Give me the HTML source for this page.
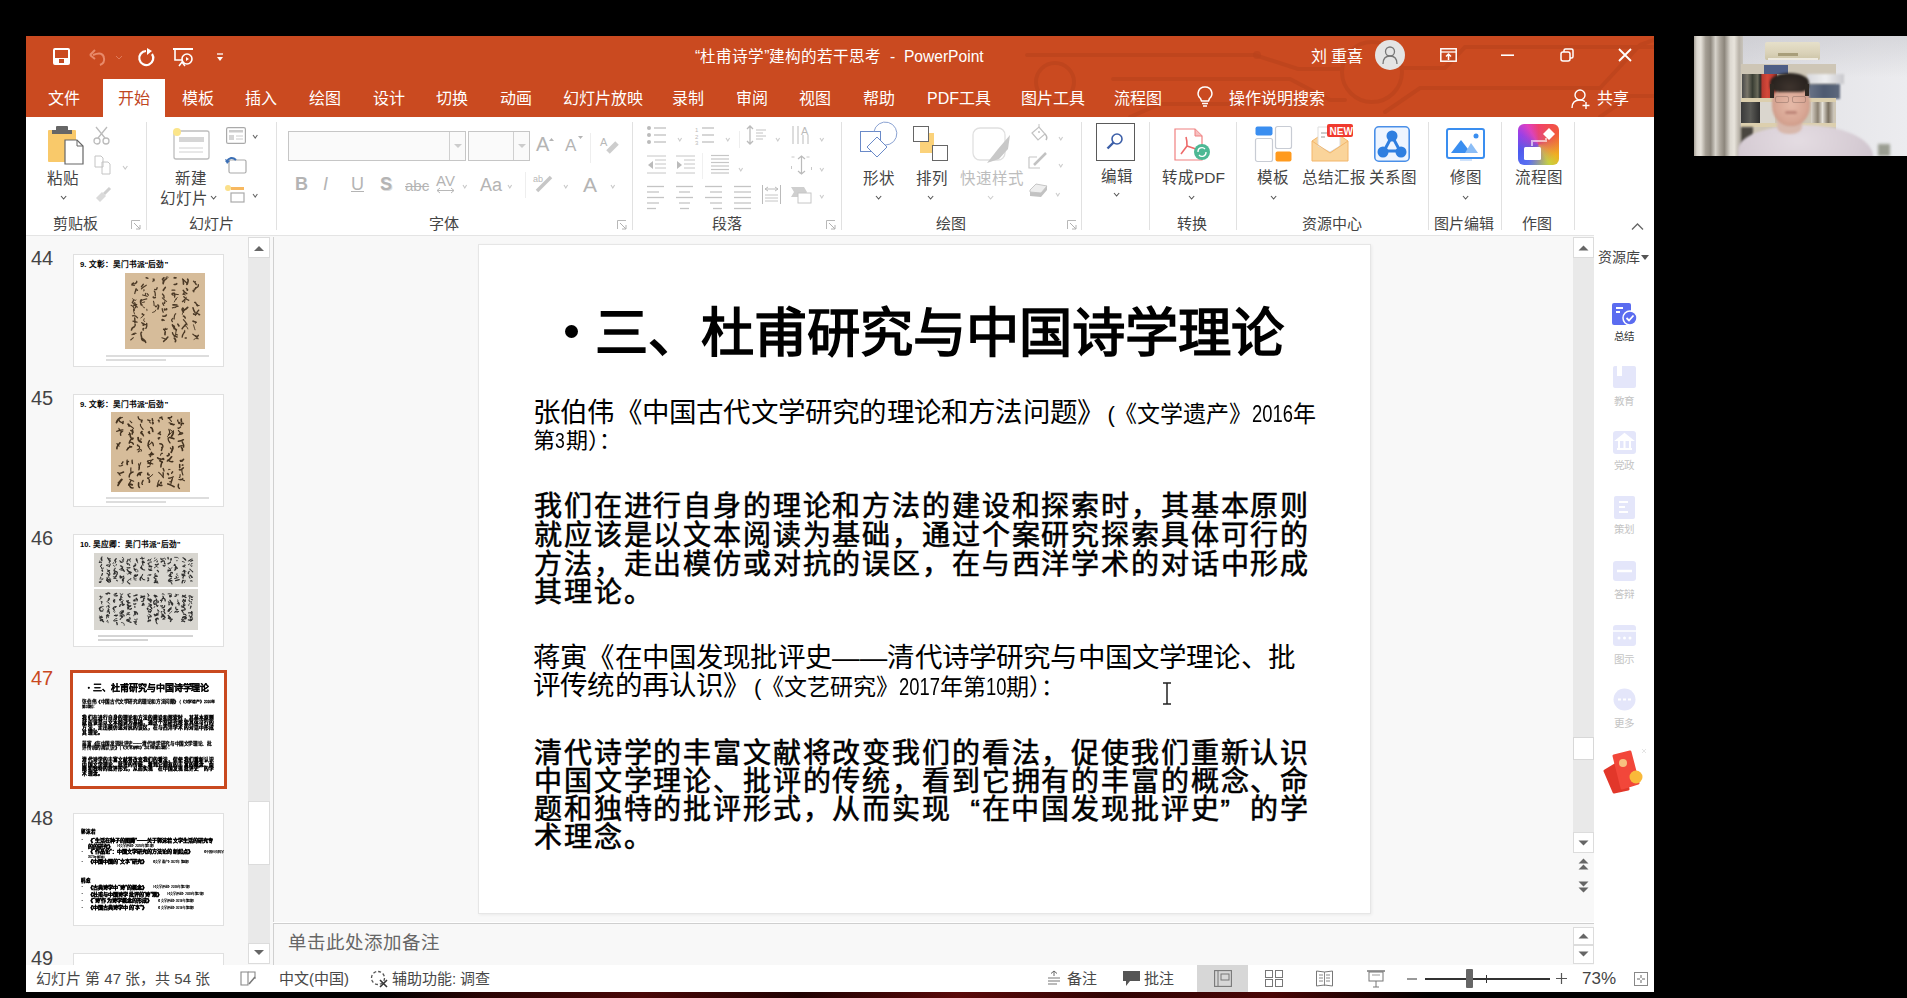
<!DOCTYPE html><html lang="zh-CN"><head><meta charset="utf-8"><style>
*{margin:0;padding:0;box-sizing:border-box}
html,body{width:1907px;height:998px;overflow:hidden;background:#000;font-family:"Liberation Sans",sans-serif}
.abs{position:absolute}
.t{position:absolute;white-space:nowrap;line-height:1}
svg{position:absolute;overflow:visible}
</style></head><body>

<div class="abs" style="left:26px;top:36px;width:1628px;height:81px;background:#CA4A20"></div>
<svg style="left:0px;top:0px;overflow:hidden;clip-path:inset(36px 0 0 26px)" width="1654" height="117" viewBox="0 0 1654 117"><g fill="none" stroke="#B9421C" stroke-width="4" opacity="0.6" stroke-linecap="round"><path d="M1027 55 L1255 55 L1298 69 L1340 69"/><path d="M1113 79 L1290 79 L1330 100 L1345 100"/><circle cx="1372" cy="72" r="30"/><circle cx="1055" cy="82" r="19"/><path d="M1402 68 L1445 68 L1465 47 L1654 47"/><path d="M1385 112 L1420 88 L1600 88 L1640 45 L1654 40"/><path d="M1130 117 L1160 104 L1300 104"/><path d="M1600 117 L1630 96 L1654 96"/></g><circle cx="1257" cy="55" r="4" fill="#B9421C" opacity="0.6"/></svg>
<svg style="left:53px;top:48px;" width="17" height="17" viewBox="0 0 17 17"><rect x="1" y="1" width="15" height="15" rx="1" fill="none" stroke="#fff" stroke-width="2"/><rect x="1" y="10" width="15" height="6" fill="#fff"/><rect x="6" y="11" width="5" height="4" fill="#C34A22"/></svg>
<svg style="left:89px;top:49px;" width="18" height="17" viewBox="0 0 18 17"><path d="M4 6 Q14 2 15 9 Q16 14 11 16" fill="none" stroke="#E88A6A" stroke-width="2"/><path d="M1 6 L6 1 M1 6 L6 10" stroke="#E88A6A" stroke-width="2" fill="none"/></svg>
<svg style="left:115px;top:55px;" width="8" height="5" viewBox="0 0 8 5"><path d="M1 1 L4 4 L7 1" stroke="#E07A5A" fill="none" stroke-width="1"/></svg>
<svg style="left:138px;top:48px;" width="17" height="18" viewBox="0 0 17 18"><path d="M8 3 A7 7 0 1 0 14 6" fill="none" stroke="#fff" stroke-width="2.2"/><path d="M9 0 L14 3 L9 7 Z" fill="#fff"/></svg>
<svg style="left:173px;top:48px;" width="20" height="19" viewBox="0 0 20 19"><path d="M0 1 L20 1" stroke="#fff" stroke-width="2"/><path d="M2 2 L2 12 L9 12" fill="none" stroke="#fff" stroke-width="1.6"/><circle cx="14" cy="11" r="5" fill="none" stroke="#fff" stroke-width="1.6"/><path d="M13 9 L16 11 L13 13Z" fill="#fff"/><path d="M6 18 L9 14 L12 18" stroke="#fff" fill="none" stroke-width="1.5"/></svg>
<svg style="left:217px;top:54px;" width="6" height="8" viewBox="0 0 6 8"><path d="M0 0 L6 0" stroke="#fff" stroke-width="1.3"/><path d="M0 3 L6 3 L3 7Z" fill="#fff"/></svg>
<div class="t" style="left:695px;top:48.5px;font-size:15.6px;color:#fff;font-weight:400;">“杜甫诗学”建构的若干思考 &nbsp;- &nbsp;PowerPoint</div>
<div class="t" style="left:1311px;top:48.5px;font-size:16px;color:#fff;font-weight:400;">刘 重喜</div>
<div class="abs" style="left:1375px;top:40px;width:30px;height:30px;background:#E4E4E4;border-radius:50%"></div>
<svg style="left:1381px;top:45px;" width="18" height="20" viewBox="0 0 18 20"><circle cx="9" cy="6.5" r="4.5" fill="none" stroke="#777" stroke-width="1.3"/><path d="M2 19 Q2 11 9 11 Q16 11 16 19" fill="none" stroke="#777" stroke-width="1.3"/></svg>
<svg style="left:1440px;top:48px;" width="17" height="14" viewBox="0 0 17 14"><rect x="0.8" y="0.8" width="15.4" height="12.4" fill="none" stroke="#fff" stroke-width="1.5"/><path d="M1 4 L16 4" stroke="#fff" stroke-width="1.3"/><path d="M8.5 12 L8.5 6 M6 8.5 L8.5 6 L11 8.5" stroke="#fff" stroke-width="1.5" fill="none"/></svg>
<svg style="left:1501px;top:54px;" width="13" height="3" viewBox="0 0 13 3"><path d="M0 1.2 L13 1.2" stroke="#fff" stroke-width="1.6"/></svg>
<svg style="left:1560px;top:48px;" width="14" height="14" viewBox="0 0 14 14"><rect x="1" y="4" width="9" height="9" rx="2" fill="none" stroke="#fff" stroke-width="1.5"/><path d="M4 4 L4 2.5 Q4 1 5.5 1 L11.5 1 Q13 1 13 2.5 L13 8.5 Q13 10 11.5 10 L10 10" fill="none" stroke="#fff" stroke-width="1.5"/></svg>
<svg style="left:1618px;top:48px;" width="14" height="14" viewBox="0 0 14 14"><path d="M1 1 L13 13 M13 1 L1 13" stroke="#fff" stroke-width="1.8"/></svg>
<div class="abs" style="left:103px;top:79px;width:62px;height:39px;background:#fff"></div>
<div class="t" style="left:118px;top:91px;font-size:16px;color:#C0461F;font-weight:400;">开始</div>
<div class="t" style="left:48px;top:91px;font-size:16px;color:#fff;font-weight:400;">文件</div>
<div class="t" style="left:182px;top:91px;font-size:16px;color:#fff;font-weight:400;">模板</div>
<div class="t" style="left:245px;top:91px;font-size:16px;color:#fff;font-weight:400;">插入</div>
<div class="t" style="left:309px;top:91px;font-size:16px;color:#fff;font-weight:400;">绘图</div>
<div class="t" style="left:373px;top:91px;font-size:16px;color:#fff;font-weight:400;">设计</div>
<div class="t" style="left:436px;top:91px;font-size:16px;color:#fff;font-weight:400;">切换</div>
<div class="t" style="left:500px;top:91px;font-size:16px;color:#fff;font-weight:400;">动画</div>
<div class="t" style="left:563px;top:91px;font-size:16px;color:#fff;font-weight:400;">幻灯片放映</div>
<div class="t" style="left:672px;top:91px;font-size:16px;color:#fff;font-weight:400;">录制</div>
<div class="t" style="left:736px;top:91px;font-size:16px;color:#fff;font-weight:400;">审阅</div>
<div class="t" style="left:799px;top:91px;font-size:16px;color:#fff;font-weight:400;">视图</div>
<div class="t" style="left:863px;top:91px;font-size:16px;color:#fff;font-weight:400;">帮助</div>
<div class="t" style="left:927px;top:91px;font-size:16px;color:#fff;font-weight:400;">PDF工具</div>
<div class="t" style="left:1021px;top:91px;font-size:16px;color:#fff;font-weight:400;">图片工具</div>
<div class="t" style="left:1114px;top:91px;font-size:16px;color:#fff;font-weight:400;">流程图</div>
<svg style="left:1197px;top:86px;" width="16" height="22" viewBox="0 0 16 22"><path d="M8 1 A6.5 6.5 0 0 0 3.5 12.5 L4.5 15 L11.5 15 L12.5 12.5 A6.5 6.5 0 0 0 8 1Z" fill="none" stroke="#fff" stroke-width="1.5"/><path d="M5 17.5 L11 17.5 M6 20 L10 20" stroke="#fff" stroke-width="1.5"/></svg>
<div class="t" style="left:1229px;top:91px;font-size:16px;color:#fff;font-weight:400;">操作说明搜索</div>
<svg style="left:1571px;top:89px;" width="19" height="20" viewBox="0 0 19 20"><circle cx="9" cy="6" r="5" fill="none" stroke="#fff" stroke-width="1.4"/><path d="M1 19 Q1 11 9 11 Q12 11 14 12.5" fill="none" stroke="#fff" stroke-width="1.4"/><path d="M15 13 L15 20 M11.5 16.5 L18.5 16.5" stroke="#fff" stroke-width="1.4"/></svg>
<div class="t" style="left:1597px;top:91px;font-size:16px;color:#fff;font-weight:400;">共享</div>
<div class="abs" style="left:26px;top:117px;width:1628px;height:118px;background:#fff"></div>
<div class="abs" style="left:26px;top:235px;width:1628px;height:1px;background:#E4E4E4"></div>
<div class="abs" style="left:146px;top:122px;width:1px;height:108px;background:#E1E1E1"></div>
<div class="abs" style="left:276px;top:122px;width:1px;height:108px;background:#E1E1E1"></div>
<div class="abs" style="left:632px;top:122px;width:1px;height:108px;background:#E1E1E1"></div>
<div class="abs" style="left:841px;top:122px;width:1px;height:108px;background:#E1E1E1"></div>
<div class="abs" style="left:1081px;top:122px;width:1px;height:108px;background:#E1E1E1"></div>
<div class="abs" style="left:1149px;top:122px;width:1px;height:108px;background:#E1E1E1"></div>
<div class="abs" style="left:1236px;top:122px;width:1px;height:108px;background:#E1E1E1"></div>
<div class="abs" style="left:1428px;top:122px;width:1px;height:108px;background:#E1E1E1"></div>
<div class="abs" style="left:1501px;top:122px;width:1px;height:108px;background:#E1E1E1"></div>
<div class="abs" style="left:1574px;top:122px;width:1px;height:108px;background:#E1E1E1"></div>
<svg style="left:48px;top:126px;" width="36" height="39" viewBox="0 0 36 39"><rect x="0" y="4" width="28" height="32" rx="1" fill="#F9C96A"/><rect x="8" y="0" width="12" height="5" rx="1" fill="#666"/><rect x="4" y="4" width="20" height="4" fill="#666"/><path d="M17 14 L29 14 L35 20 L35 38 L17 38 Z" fill="#fff" stroke="#666" stroke-width="1.2"/><path d="M29 14 L29 20 L35 20" fill="none" stroke="#666" stroke-width="1"/></svg>
<div class="t" style="left:47px;top:170.5px;font-size:15.5px;color:#444;font-weight:400;">粘贴</div>
<svg style="left:60px;top:195px;" width="7.2" height="5" viewBox="0 0 7.2 5"><path d="M1 1 L3.6 4 L6.2 1" fill="none" stroke="#555" stroke-width="1.1"/></svg>
<div class="t" style="left:53px;top:216px;font-size:15px;color:#444;font-weight:400;">剪贴板</div>
<svg style="left:131px;top:220px;" width="10" height="10" viewBox="0 0 10 10"><path d="M0.5 9 L0.5 0.5 L9 0.5" fill="none" stroke="#B8B8B8" stroke-width="1"/><path d="M3 3 L9 9 M5 9 L9 9 L9 5" fill="none" stroke="#B0B0B0" stroke-width="1"/></svg>
<svg style="left:93px;top:126px;" width="18" height="19" viewBox="0 0 18 19"><circle cx="4" cy="15" r="3" fill="none" stroke="#BBB" stroke-width="1.3"/><circle cx="13" cy="15" r="3" fill="none" stroke="#BBB" stroke-width="1.3"/><path d="M5 12 L14 1 M12 12 L3 1" stroke="#BBB" stroke-width="1.3"/></svg>
<svg style="left:94px;top:155px;" width="17" height="20" viewBox="0 0 17 20"><path d="M1 1 L7 1 L9 3 L9 12 L1 12 Z M8 7 L14 7 L16 9 L16 19 L8 19 Z" fill="#fff" stroke="#C4C4C4" stroke-width="1"/></svg>
<svg style="left:122px;top:165px;" width="6.4" height="5" viewBox="0 0 6.4 5"><path d="M1 1 L3.2 4 L5.4 1" fill="none" stroke="#C8C8C8" stroke-width="1.1"/></svg>
<svg style="left:94px;top:186px;" width="18" height="17" viewBox="0 0 18 17"><path d="M2 12 L8 6 L12 10 L6 16 Z" fill="#DADADA"/><path d="M10 8 L16 2" stroke="#CFCFCF" stroke-width="3"/></svg>
<svg style="left:170px;top:125px;" width="40" height="35" viewBox="0 0 40 35"><rect x="4" y="6" width="35" height="28" rx="2" fill="#fff" stroke="#BDBDBD" stroke-width="1.3"/><rect x="9" y="12" width="25" height="5" fill="#D6D6D6"/><path d="M9 23 L33 23 M9 27 L33 27" stroke="#D0D0D0" stroke-width="1"/><circle cx="7" cy="7" r="4" fill="#FBE58A"/></svg>
<div class="t" style="left:175px;top:170.5px;font-size:15.5px;color:#444;font-weight:400;">新建</div>
<div class="t" style="left:160px;top:190.5px;font-size:15.5px;color:#444;font-weight:400;">幻灯片</div>
<svg style="left:210px;top:195px;" width="7.2" height="5" viewBox="0 0 7.2 5"><path d="M1 1 L3.6 4 L6.2 1" fill="none" stroke="#555" stroke-width="1.1"/></svg>
<div class="t" style="left:189px;top:216px;font-size:15px;color:#444;font-weight:400;">幻灯片</div>
<svg style="left:226px;top:127px;" width="20" height="17" viewBox="0 0 20 17"><rect x="0.6" y="0.6" width="18.8" height="15.8" rx="1.5" fill="#fff" stroke="#AAA" stroke-width="1.2"/><rect x="3" y="3" width="14" height="2.5" fill="#CCC"/><rect x="3" y="8" width="5" height="5" fill="#D5D5D5"/><path d="M10 9 L17 9 M10 12 L17 12" stroke="#CCC"/></svg>
<svg style="left:252px;top:134px;" width="6.4" height="5" viewBox="0 0 6.4 5"><path d="M1 1 L3.2 4 L5.4 1" fill="none" stroke="#666" stroke-width="1.1"/></svg>
<svg style="left:225px;top:156px;" width="22" height="18" viewBox="0 0 22 18"><rect x="4" y="4" width="17" height="13" rx="1.5" fill="#fff" stroke="#AAA" stroke-width="1.2"/><path d="M1 6 Q6 -1 11 4" fill="none" stroke="#3B6FB5" stroke-width="2"/><path d="M0 3 L2 8 L5 5Z" fill="#3B6FB5"/></svg>
<svg style="left:225px;top:185px;" width="20" height="18" viewBox="0 0 20 18"><rect x="6" y="2" width="13" height="3" fill="#F7B860"/><circle cx="3" cy="3" r="3" fill="#FBE08A"/><rect x="6" y="8" width="13" height="9" fill="#fff" stroke="#AAA" stroke-width="1.2"/></svg>
<svg style="left:252px;top:193px;" width="6.4" height="5" viewBox="0 0 6.4 5"><path d="M1 1 L3.2 4 L5.4 1" fill="none" stroke="#666" stroke-width="1.1"/></svg>
<div class="abs" style="left:288px;top:131px;width:178px;height:30px;border:1px solid #C6C6C6;background:#FAFAFA"></div>
<div class="abs" style="left:449px;top:132px;width:1px;height:28px;background:#D0D0D0"></div>
<svg style="left:454px;top:144px;" width="8" height="4" viewBox="0 0 8 4"><path d="M0 0 L8 0 L4 4Z" fill="#CCC"/></svg>
<div class="abs" style="left:468px;top:131px;width:62px;height:30px;border:1px solid #C6C6C6;background:#FAFAFA"></div>
<div class="abs" style="left:513px;top:132px;width:1px;height:28px;background:#D0D0D0"></div>
<svg style="left:518px;top:144px;" width="8" height="4" viewBox="0 0 8 4"><path d="M0 0 L8 0 L4 4Z" fill="#CCC"/></svg>
<div class="t" style="left:536px;top:134px;font-size:20px;color:#B4B4B4;font-weight:400;">A</div>
<svg style="left:549px;top:138px;" width="5" height="3" viewBox="0 0 5 3"><path d="M0 3 L2.5 0 L5 3Z" fill="#B4B4B4"/></svg>
<div class="t" style="left:565px;top:137px;font-size:17px;color:#B4B4B4;font-weight:400;">A</div>
<svg style="left:578px;top:136px;" width="5" height="3" viewBox="0 0 5 3"><path d="M0 0 L5 0 L2.5 3Z" fill="#B4B4B4"/></svg>
<div class="abs" style="left:590px;top:133px;width:1px;height:30px;background:#EEE"></div>
<svg style="left:600px;top:135px;" width="20" height="19" viewBox="0 0 20 19"><text x="0" y="11" font-size="11" fill="#B8B8B8" font-family="Liberation Sans">A</text><path d="M8 17 L17 8" stroke="#CDCDCD" stroke-width="5"/></svg>
<div class="t" style="left:295px;top:175px;font-size:18px;color:#B4B4B4;font-weight:700;">B</div>
<div class="t" style="left:323px;top:175px;font-size:18px;color:#B4B4B4;font-weight:400;"><i>I</i></div>
<div class="t" style="left:351px;top:175px;font-size:18px;color:#B4B4B4;font-weight:400;"><u>U</u></div>
<div class="t" style="left:380px;top:175px;font-size:18px;color:#B4B4B4;font-weight:700;text-shadow:1px 1px 0 #DDD">S</div>
<div class="t" style="left:405px;top:178px;font-size:15px;color:#B4B4B4;font-weight:400;"><s>abc</s></div>
<div class="t" style="left:436px;top:173px;font-size:15px;color:#B4B4B4;font-weight:400;">AV</div>
<svg style="left:436px;top:188px;" width="19" height="5" viewBox="0 0 19 5"><path d="M1 2.5 L18 2.5 M1 2.5 L4 0 M1 2.5 L4 5 M18 2.5 L15 0 M18 2.5 L15 5" stroke="#B8B8B8" stroke-width="1"/></svg>
<svg style="left:462px;top:184px;" width="5.6000000000000005" height="5" viewBox="0 0 5.6000000000000005 5"><path d="M1 1 L2.8000000000000003 4 L4.6000000000000005 1" fill="none" stroke="#C8C8C8" stroke-width="1.1"/></svg>
<div class="t" style="left:480px;top:176px;font-size:18px;color:#B4B4B4;font-weight:400;">Aa</div>
<svg style="left:507px;top:184px;" width="5.6000000000000005" height="5" viewBox="0 0 5.6000000000000005 5"><path d="M1 1 L2.8000000000000003 4 L4.6000000000000005 1" fill="none" stroke="#C8C8C8" stroke-width="1.1"/></svg>
<div class="abs" style="left:525px;top:172px;width:1px;height:26px;background:#EEE"></div>
<svg style="left:533px;top:174px;" width="20" height="18" viewBox="0 0 20 18"><text x="0" y="8" font-size="9" fill="#B8B8B8" font-family="Liberation Sans">ab</text><path d="M4 17 L18 3" stroke="#C6C6C6" stroke-width="3.5"/></svg>
<svg style="left:563px;top:184px;" width="5.6000000000000005" height="5" viewBox="0 0 5.6000000000000005 5"><path d="M1 1 L2.8000000000000003 4 L4.6000000000000005 1" fill="none" stroke="#C8C8C8" stroke-width="1.1"/></svg>
<div class="t" style="left:583px;top:174px;font-size:21px;color:#B4B4B4;font-weight:400;">A</div>
<svg style="left:610px;top:184px;" width="5.6000000000000005" height="5" viewBox="0 0 5.6000000000000005 5"><path d="M1 1 L2.8000000000000003 4 L4.6000000000000005 1" fill="none" stroke="#C8C8C8" stroke-width="1.1"/></svg>
<div class="t" style="left:429px;top:216px;font-size:15px;color:#444;font-weight:400;">字体</div>
<svg style="left:617px;top:220px;" width="10" height="10" viewBox="0 0 10 10"><path d="M0.5 9 L0.5 0.5 L9 0.5" fill="none" stroke="#B8B8B8" stroke-width="1"/><path d="M3 3 L9 9 M5 9 L9 9 L9 5" fill="none" stroke="#B0B0B0" stroke-width="1"/></svg>
<svg style="left:647px;top:126px;" width="20" height="18" viewBox="0 0 20 18"><circle cx="2" cy="2" r="2" fill="#BBB"/><path d="M7 2 L19 2" stroke="#BBB" stroke-width="1.2"/><circle cx="2" cy="9" r="2" fill="#BBB"/><path d="M7 9 L19 9" stroke="#BBB" stroke-width="1.2"/><circle cx="2" cy="16" r="2" fill="#BBB"/><path d="M7 16 L19 16" stroke="#BBB" stroke-width="1.2"/></svg>
<svg style="left:677px;top:137px;" width="5.6000000000000005" height="5" viewBox="0 0 5.6000000000000005 5"><path d="M1 1 L2.8000000000000003 4 L4.6000000000000005 1" fill="none" stroke="#CCC" stroke-width="1.1"/></svg>
<svg style="left:695px;top:126px;" width="20" height="19" viewBox="0 0 20 19"><text x="0" y="6" font-size="6" fill="#BBB">1</text><text x="0" y="13" font-size="6" fill="#BBB">2</text><text x="0" y="19" font-size="6" fill="#BBB">3</text><path d="M7 2 L19 2" stroke="#BBB" stroke-width="1.2"/><path d="M7 9 L19 9" stroke="#BBB" stroke-width="1.2"/><path d="M7 16 L19 16" stroke="#BBB" stroke-width="1.2"/></svg>
<svg style="left:725px;top:137px;" width="5.6000000000000005" height="5" viewBox="0 0 5.6000000000000005 5"><path d="M1 1 L2.8000000000000003 4 L4.6000000000000005 1" fill="none" stroke="#CCC" stroke-width="1.1"/></svg>
<div class="abs" style="left:739px;top:131px;width:1px;height:17px;background:#EEEEEE"></div>
<svg style="left:747px;top:125px;" width="20" height="20" viewBox="0 0 20 20"><path d="M3 1 L3 19 M0 4 L3 1 L6 4 M0 16 L3 19 L6 16" stroke="#BBB" fill="none" stroke-width="1.3"/><path d="M9 5 L19 5 M9 8 L16 8 M9 11 L19 11 M9 14 L16 14" stroke="#C2C2C2"/></svg>
<svg style="left:775px;top:137px;" width="5.6000000000000005" height="5" viewBox="0 0 5.6000000000000005 5"><path d="M1 1 L2.8000000000000003 4 L4.6000000000000005 1" fill="none" stroke="#CCC" stroke-width="1.1"/></svg>
<svg style="left:791px;top:125px;" width="22" height="21" viewBox="0 0 22 21"><path d="M2 1 L2 19 M7 1 L7 19 M12 10 L12 19 M17 10 L17 19" stroke="#BBB" stroke-width="1"/><text x="10" y="10" font-size="11" fill="#BBB">A</text></svg>
<svg style="left:819px;top:137px;" width="5.6000000000000005" height="5" viewBox="0 0 5.6000000000000005 5"><path d="M1 1 L2.8000000000000003 4 L4.6000000000000005 1" fill="none" stroke="#CCC" stroke-width="1.1"/></svg>
<svg style="left:647px;top:155px;" width="19" height="20" viewBox="0 0 19 20"><path d="M0 1 L19 1 M8 5 L19 5 M8 9 L19 9 M8 13 L19 13 M0 18 L19 18" stroke="#C6C6C6"/><path d="M1 10 L6 6 L6 14Z" fill="#BBB"/></svg>
<svg style="left:676px;top:155px;" width="19" height="20" viewBox="0 0 19 20"><path d="M0 1 L19 1 M8 5 L19 5 M8 9 L19 9 M8 13 L19 13 M0 18 L19 18" stroke="#C6C6C6"/><path d="M6 10 L1 6 L1 14Z" fill="#BBB"/></svg>
<div class="abs" style="left:702px;top:153px;width:1px;height:26px;background:#F0F0F0"></div>
<svg style="left:711px;top:155px;" width="18" height="19.5" viewBox="0 0 18 19.5"><path d="M0 0.5 L18 0.5" stroke="#C6C6C6" stroke-width="1.2"/><path d="M0 4.0 L18 4.0" stroke="#C6C6C6" stroke-width="1.2"/><path d="M0 7.5 L18 7.5" stroke="#C6C6C6" stroke-width="1.2"/><path d="M0 11.0 L18 11.0" stroke="#C6C6C6" stroke-width="1.2"/><path d="M0 14.5 L18 14.5" stroke="#C6C6C6" stroke-width="1.2"/><path d="M0 18.0 L18 18.0" stroke="#C6C6C6" stroke-width="1.2"/></svg>
<svg style="left:738px;top:167px;" width="5.6000000000000005" height="5" viewBox="0 0 5.6000000000000005 5"><path d="M1 1 L2.8000000000000003 4 L4.6000000000000005 1" fill="none" stroke="#CCC" stroke-width="1.1"/></svg>
<svg style="left:791px;top:155px;" width="21" height="20" viewBox="0 0 21 20"><rect x="0.5" y="2" width="20" height="16" fill="none" stroke="#C8C8C8" stroke-dasharray="3 12"/><path d="M10.5 1 L10.5 19 M7 4 L10.5 1 L14 4 M7 16 L10.5 19 L14 16" stroke="#BBB" fill="none" stroke-width="1.2"/></svg>
<svg style="left:819px;top:167px;" width="5.6000000000000005" height="5" viewBox="0 0 5.6000000000000005 5"><path d="M1 1 L2.8000000000000003 4 L4.6000000000000005 1" fill="none" stroke="#CCC" stroke-width="1.1"/></svg>
<svg style="left:647px;top:186px;" width="18" height="30" viewBox="0 0 18 30"><path d="M0 0.5 L17 0.5" stroke="#C4C4C4" stroke-width="1.3"/><path d="M0 6.0 L12 6.0" stroke="#C4C4C4" stroke-width="1.3"/><path d="M0 11.5 L17 11.5" stroke="#C4C4C4" stroke-width="1.3"/><path d="M0 17.0 L12 17.0" stroke="#C4C4C4" stroke-width="1.3"/><path d="M0 22.5 L9 22.5" stroke="#C4C4C4" stroke-width="1.3"/></svg>
<svg style="left:676px;top:186px;" width="18" height="30" viewBox="0 0 18 30"><path d="M0 0.5 L17 0.5" stroke="#C4C4C4" stroke-width="1.3"/><path d="M3 6.0 L14 6.0" stroke="#C4C4C4" stroke-width="1.3"/><path d="M0 11.5 L17 11.5" stroke="#C4C4C4" stroke-width="1.3"/><path d="M3 17.0 L14 17.0" stroke="#C4C4C4" stroke-width="1.3"/><path d="M4 22.5 L13 22.5" stroke="#C4C4C4" stroke-width="1.3"/></svg>
<svg style="left:705px;top:186px;" width="18" height="30" viewBox="0 0 18 30"><path d="M0 0.5 L17 0.5" stroke="#C4C4C4" stroke-width="1.3"/><path d="M5 6.0 L17 6.0" stroke="#C4C4C4" stroke-width="1.3"/><path d="M0 11.5 L17 11.5" stroke="#C4C4C4" stroke-width="1.3"/><path d="M5 17.0 L17 17.0" stroke="#C4C4C4" stroke-width="1.3"/><path d="M8 22.5 L17 22.5" stroke="#C4C4C4" stroke-width="1.3"/></svg>
<svg style="left:734px;top:186px;" width="18" height="30" viewBox="0 0 18 30"><path d="M0 0.5 L17 0.5" stroke="#C4C4C4" stroke-width="1.3"/><path d="M0 6.0 L17 6.0" stroke="#C4C4C4" stroke-width="1.3"/><path d="M0 11.5 L17 11.5" stroke="#C4C4C4" stroke-width="1.3"/><path d="M0 17.0 L17 17.0" stroke="#C4C4C4" stroke-width="1.3"/><path d="M0 22.5 L17 22.5" stroke="#C4C4C4" stroke-width="1.3"/></svg>
<svg style="left:762px;top:185px;" width="19" height="19" viewBox="0 0 19 19"><path d="M0.5 0 L0.5 19 M18.5 0 L18.5 19" stroke="#BBB"/><path d="M3 4 L16 4 M3 4 L6 2 M3 4 L6 6 M16 4 L13 2 M16 4 L13 6" stroke="#BBB" fill="none"/><path d="M3 10 L16 10 M3 13 L16 13 M3 16 L16 16" stroke="#C6C6C6"/></svg>
<svg style="left:791px;top:187px;" width="21" height="17" viewBox="0 0 21 17"><path d="M0 0 L13 0 L16 5 L13 10 L0 10 L3 5Z" fill="#CFCFCF"/><rect x="7" y="6" width="13" height="10" fill="#fff" stroke="#C6C6C6"/></svg>
<svg style="left:819px;top:194px;" width="5.6000000000000005" height="5" viewBox="0 0 5.6000000000000005 5"><path d="M1 1 L2.8000000000000003 4 L4.6000000000000005 1" fill="none" stroke="#CCC" stroke-width="1.1"/></svg>
<div class="t" style="left:712px;top:216px;font-size:15px;color:#444;font-weight:400;">段落</div>
<svg style="left:826px;top:220px;" width="10" height="10" viewBox="0 0 10 10"><path d="M0.5 9 L0.5 0.5 L9 0.5" fill="none" stroke="#B8B8B8" stroke-width="1"/><path d="M3 3 L9 9 M5 9 L9 9 L9 5" fill="none" stroke="#B0B0B0" stroke-width="1"/></svg>
<svg style="left:859px;top:126px;" width="40" height="40" viewBox="0 0 40 40"><rect x="1.5" y="5.5" width="20" height="20" fill="none" stroke="#6A8AC8" stroke-width="1"/><path d="M21.5 18 A11.5 11.5 0 1 0 15 5.5" fill="none" stroke="#8AA2D2" stroke-width="1"/><path d="M18 11 L28 21 L18 31 L8 21Z" fill="#fff" stroke="#6A8AC8" stroke-width="1"/></svg>
<div class="t" style="left:863px;top:170.5px;font-size:15.5px;color:#444;font-weight:400;">形状</div>
<svg style="left:875px;top:195px;" width="7.2" height="5" viewBox="0 0 7.2 5"><path d="M1 1 L3.6 4 L6.2 1" fill="none" stroke="#555" stroke-width="1.1"/></svg>
<svg style="left:913px;top:126px;" width="36" height="36" viewBox="0 0 36 36"><rect x="7" y="7" width="14" height="20" fill="#FBD27A"/><rect x="14" y="7" width="7" height="13" fill="#FBD27A"/><rect x="0.5" y="0.5" width="15" height="15" fill="#fff" stroke="#666"/><rect x="19.5" y="19.5" width="15" height="15" fill="#fff" stroke="#666"/></svg>
<div class="t" style="left:916px;top:170.5px;font-size:15.5px;color:#444;font-weight:400;">排列</div>
<svg style="left:927px;top:195px;" width="7.2" height="5" viewBox="0 0 7.2 5"><path d="M1 1 L3.6 4 L6.2 1" fill="none" stroke="#555" stroke-width="1.1"/></svg>
<svg style="left:972px;top:127px;" width="40" height="38" viewBox="0 0 40 38"><rect x="1" y="1" width="32" height="32" rx="7" fill="none" stroke="#E0E0E0" stroke-width="1.3"/><path d="M15 36 L26 22 L38 8 L36 22 L27 32Z" fill="#C8C8C8"/></svg>
<div class="t" style="left:960px;top:170.5px;font-size:15.5px;color:#BDBDBD;font-weight:400;">快速样式</div>
<svg style="left:987px;top:195px;" width="7.2" height="5" viewBox="0 0 7.2 5"><path d="M1 1 L3.6 4 L6.2 1" fill="none" stroke="#CCC" stroke-width="1.1"/></svg>
<svg style="left:1030px;top:124px;" width="18" height="18" viewBox="0 0 18 18"><path d="M2 9 L9 3 L15 10 L8 16Z" fill="none" stroke="#C3C3C3" stroke-width="1.2"/><path d="M9 3 L9 0" stroke="#C3C3C3"/><circle cx="9" cy="8" r="1" fill="#C3C3C3"/><path d="M15 10 Q18 13 16 16" stroke="#BBB" fill="none" stroke-width="1.5"/></svg>
<svg style="left:1058px;top:136px;" width="5.6000000000000005" height="5" viewBox="0 0 5.6000000000000005 5"><path d="M1 1 L2.8000000000000003 4 L4.6000000000000005 1" fill="none" stroke="#CCC" stroke-width="1.1"/></svg>
<svg style="left:1028px;top:152px;" width="20" height="17" viewBox="0 0 20 17"><path d="M1 5 L9 5 M1 5 L1 16 L12 16" fill="none" stroke="#C6C6C6" stroke-width="1.2"/><path d="M6 13 L18 1" stroke="#C2C2C2" stroke-width="2.5"/></svg>
<svg style="left:1058px;top:163px;" width="5.6000000000000005" height="5" viewBox="0 0 5.6000000000000005 5"><path d="M1 1 L2.8000000000000003 4 L4.6000000000000005 1" fill="none" stroke="#CCC" stroke-width="1.1"/></svg>
<svg style="left:1028px;top:182px;" width="20" height="17" viewBox="0 0 20 17"><path d="M2 8 L8 2 L19 4 L13 11 L2 10Z" fill="#EEEEEE" stroke="#C6C6C6"/><path d="M2 10 L13 11 L19 4 L19 8 L13 15 L2 14Z" fill="#C2C2C2"/></svg>
<svg style="left:1055px;top:192px;" width="5.6000000000000005" height="5" viewBox="0 0 5.6000000000000005 5"><path d="M1 1 L2.8000000000000003 4 L4.6000000000000005 1" fill="none" stroke="#CCC" stroke-width="1.1"/></svg>
<div class="t" style="left:936px;top:216px;font-size:15px;color:#444;font-weight:400;">绘图</div>
<svg style="left:1067px;top:220px;" width="10" height="10" viewBox="0 0 10 10"><path d="M0.5 9 L0.5 0.5 L9 0.5" fill="none" stroke="#B8B8B8" stroke-width="1"/><path d="M3 3 L9 9 M5 9 L9 9 L9 5" fill="none" stroke="#B0B0B0" stroke-width="1"/></svg>
<div class="abs" style="left:1096px;top:123px;width:39px;height:38px;border:1.5px solid #5A5A5A;background:#fff"></div>
<svg style="left:1106px;top:133px;" width="18" height="18" viewBox="0 0 18 18"><circle cx="11" cy="6" r="5" fill="none" stroke="#3C5FA8" stroke-width="1.6"/><path d="M7.5 9.5 L1.5 15.5" stroke="#3C5FA8" stroke-width="2.4"/></svg>
<div class="t" style="left:1101px;top:168.5px;font-size:15.5px;color:#444;font-weight:400;">编辑</div>
<svg style="left:1113px;top:192px;" width="7.2" height="5" viewBox="0 0 7.2 5"><path d="M1 1 L3.6 4 L6.2 1" fill="none" stroke="#555" stroke-width="1.1"/></svg>
<svg style="left:1174px;top:128px;" width="38" height="34" viewBox="0 0 38 34"><path d="M1 1 L21 1 L28 8 L28 32 L1 32Z" fill="#fff" stroke="#F08080" stroke-width="1.2"/><path d="M21 1 L21 8 L28 8" fill="#F6C0C0" stroke="#F08080"/><path d="M7 26 L13 18 Q13 12 12 9 M13 18 L22 21" fill="none" stroke="#EE6A6A" stroke-width="1.6"/><circle cx="28" cy="24" r="8" fill="#4DB894"/><path d="M24 24 A4 4 0 0 1 31 21 M32 24 A4 4 0 0 1 25 27" fill="none" stroke="#fff" stroke-width="1.3"/></svg>
<div class="t" style="left:1162px;top:169.5px;font-size:15.5px;color:#444;font-weight:400;">转成PDF</div>
<svg style="left:1188px;top:195px;" width="7.2" height="5" viewBox="0 0 7.2 5"><path d="M1 1 L3.6 4 L6.2 1" fill="none" stroke="#555" stroke-width="1.1"/></svg>
<div class="t" style="left:1177px;top:216px;font-size:15px;color:#444;font-weight:400;">转换</div>
<svg style="left:1255px;top:126px;" width="37" height="37" viewBox="0 0 37 37"><rect x="0.5" y="0.5" width="17" height="9" rx="2" fill="#3A8EF0"/><rect x="20.5" y="0.5" width="16" height="22" rx="2" fill="#fff" stroke="#C8CCD4" stroke-width="1.2"/><rect x="0.5" y="12.5" width="17" height="23" rx="2" fill="#fff" stroke="#C8CCD4" stroke-width="1.2"/><rect x="20.5" y="25.5" width="16" height="10" rx="2" fill="#FF9A1E"/></svg>
<div class="t" style="left:1257px;top:169.5px;font-size:15.5px;color:#444;font-weight:400;">模板</div>
<svg style="left:1270px;top:195px;" width="7.2" height="5" viewBox="0 0 7.2 5"><path d="M1 1 L3.6 4 L6.2 1" fill="none" stroke="#555" stroke-width="1.1"/></svg>
<svg style="left:1311px;top:124px;" width="42" height="38" viewBox="0 0 42 38"><path d="M1 17 L19 5 L37 17 L37 37 L1 37Z" fill="#FAD49A" stroke="#F3B66A"/><path d="M7 3 L29 3 L29 22 L19 28 L7 22Z" fill="#fff" stroke="#DDD"/><path d="M10 9 L16 9 M10 13 L14 13" stroke="#999"/><path d="M1 17 L19 29 L37 17" fill="none" stroke="#F3B66A"/><rect x="16" y="0" width="26" height="13" rx="2" fill="#F03A2E"/><text x="18.5" y="10.5" font-size="10" font-weight="700" fill="#fff" font-family="Liberation Sans">NEW</text></svg>
<div class="t" style="left:1302px;top:169.5px;font-size:15.5px;color:#444;font-weight:400;">总结汇报</div>
<svg style="left:1374px;top:126px;" width="36" height="36" viewBox="0 0 36 36"><rect x="0.8" y="0.8" width="34.4" height="34.4" rx="4" fill="#EEF5FF" stroke="#4A8FE8" stroke-width="1.6"/><path d="M18 10 L10 25 L26 25Z" fill="none" stroke="#2F7FE0" stroke-width="3"/><circle cx="18" cy="10" r="5.5" fill="#2F7FE0"/><circle cx="9" cy="26" r="5.5" fill="#2F7FE0"/><circle cx="27" cy="26" r="5.5" fill="#2F7FE0"/></svg>
<div class="t" style="left:1369px;top:169.5px;font-size:15.5px;color:#444;font-weight:400;">关系图</div>
<div class="t" style="left:1302px;top:216px;font-size:15px;color:#444;font-weight:400;">资源中心</div>
<svg style="left:1446px;top:128px;" width="40" height="34" viewBox="0 0 40 34"><rect x="1" y="1" width="37" height="29" rx="2" fill="#fff" stroke="#3A8EF0" stroke-width="2"/><path d="M5 25 L15 12 L25 25Z" fill="#3A8EF0"/><path d="M19 25 L25 15 L32 25Z" fill="#8BBDF6"/><circle cx="30" cy="8" r="2.5" fill="#3A8EF0"/><path d="M14 32 L26 32" stroke="#CFE2FB" stroke-width="2"/></svg>
<div class="t" style="left:1450px;top:169.5px;font-size:15.5px;color:#444;font-weight:400;">修图</div>
<svg style="left:1462px;top:195px;" width="7.2" height="5" viewBox="0 0 7.2 5"><path d="M1 1 L3.6 4 L6.2 1" fill="none" stroke="#555" stroke-width="1.1"/></svg>
<div class="t" style="left:1434px;top:216px;font-size:15px;color:#444;font-weight:400;">图片编辑</div>
<div class="abs" style="left:1518px;top:124px;width:41px;height:41px;border-radius:6px;background:conic-gradient(from 0deg at 50% 50%,#F2406A 0deg,#F25A3A 60deg,#F0B020 120deg,#C8D040 150deg,#5A70F0 210deg,#4A5AF0 250deg,#9A40E8 300deg,#E040C0 330deg,#F2406A 360deg)"></div>
<div class="abs" style="left:1518px;top:124px;width:41px;height:41px;border-radius:6px;background:radial-gradient(circle at 50% 50%,rgba(200,80,160,.5) 0%,rgba(200,80,160,0) 70%)"></div>
<svg style="left:1518px;top:124px;" width="41" height="41" viewBox="0 0 41 41"><path d="M31 4 L37 10 L31 16 L25 10Z" fill="#fff"/><rect x="6" y="23" width="17" height="13" rx="1.5" fill="#fff"/><path d="M14 22 L14 17 L28 17 L28 14" fill="none" stroke="rgba(255,255,255,.6)" stroke-width="2"/></svg>
<div class="t" style="left:1515px;top:169.5px;font-size:15.5px;color:#444;font-weight:400;">流程图</div>
<div class="t" style="left:1522px;top:216px;font-size:15px;color:#444;font-weight:400;">作图</div>
<svg style="left:1631px;top:223px;" width="13" height="7" viewBox="0 0 13 7"><path d="M1 6.5 L6.5 1 L12 6.5" fill="none" stroke="#666" stroke-width="1.3"/></svg>
<div class="abs" style="left:26px;top:236px;width:1628px;height:729px;background:#F8F8F8"></div>
<div class="abs" style="left:248px;top:258px;width:22px;height:685px;background:#E9E9E9"></div>
<div class="abs" style="left:248px;top:237px;width:22px;height:21px;background:#fff;border:1px solid #DCDCDC"></div>
<svg style="left:253px;top:245px;" width="12" height="6" viewBox="0 0 12 6"><path d="M1 6 L6 1 L11 6Z" fill="#666"/></svg>
<div class="abs" style="left:248px;top:801px;width:22px;height:64px;background:#fff;border:1px solid #DCDCDC"></div>
<div class="abs" style="left:248px;top:943px;width:22px;height:21px;background:#fff;border:1px solid #DCDCDC"></div>
<svg style="left:253px;top:950px;" width="12" height="6" viewBox="0 0 12 6"><path d="M1 0 L6 5 L11 0Z" fill="#666"/></svg>
<div class="abs" style="left:273px;top:237px;width:1px;height:728px;background:#D0D0D0"></div>
<div class="t" style="left:31px;top:248px;font-size:20px;color:#444;font-weight:400;">44</div>
<div class="t" style="left:31px;top:388px;font-size:20px;color:#444;font-weight:400;">45</div>
<div class="t" style="left:31px;top:528px;font-size:20px;color:#444;font-weight:400;">46</div>
<div class="t" style="left:31px;top:668px;font-size:20px;color:#C9491F;font-weight:400;">47</div>
<div class="t" style="left:31px;top:808px;font-size:20px;color:#444;font-weight:400;">48</div>
<div class="t" style="left:31px;top:948px;font-size:20px;color:#444;font-weight:400;">49</div>
<div class="abs" style="left:73px;top:254px;width:151px;height:113px;background:#fff;border:1px solid #E0E0E0"></div>
<div class="abs" style="left:73px;top:254px;width:151px;height:113px;overflow:hidden"><div class="t" style="left:7px;top:7px;font-size:7.7px;font-weight:700;color:#000">9. 文彰：吴门书派“后劲”</div><div class="abs" style="left:52px;top:19px;width:80px;height:76px;background:#D6BC9A;overflow:hidden"><svg style="left:0;top:0;opacity:0.8;filter:blur(0.3px)" width="80" height="76"><path d="M11.7 8.3 Q12.4 9.4 9.7 10.9" stroke="#2A1A0A" stroke-width="1.34" fill="none" stroke-linecap="round"/><path d="M7.2 10.3 Q7.9 12.8 9.4 12.4" stroke="#2A1A0A" stroke-width="1.09" fill="none" stroke-linecap="round"/><path d="M7.0 11.9 Q8.8 9.7 8.4 10.3" stroke="#2A1A0A" stroke-width="1.66" fill="none" stroke-linecap="round"/><path d="M11.1 15.6 Q10.0 19.2 9.8 20.5" stroke="#2A1A0A" stroke-width="1.24" fill="none" stroke-linecap="round"/><path d="M10.6 18.1 Q11.0 15.8 12.5 17.3" stroke="#2A1A0A" stroke-width="1.30" fill="none" stroke-linecap="round"/><path d="M8.7 27.5 Q7.8 27.9 7.7 29.4" stroke="#2A1A0A" stroke-width="1.37" fill="none" stroke-linecap="round"/><path d="M9.7 29.8 Q11.5 34.2 10.5 34.7" stroke="#2A1A0A" stroke-width="1.43" fill="none" stroke-linecap="round"/><path d="M7.1 29.4 Q10.1 32.6 12.5 34.1" stroke="#2A1A0A" stroke-width="1.07" fill="none" stroke-linecap="round"/><path d="M11.2 27.1 Q10.8 28.4 7.6 25.8" stroke="#2A1A0A" stroke-width="0.98" fill="none" stroke-linecap="round"/><path d="M11.6 31.6 Q8.6 32.6 8.6 32.8" stroke="#2A1A0A" stroke-width="1.50" fill="none" stroke-linecap="round"/><path d="M8.4 36.2 Q8.1 37.6 9.5 41.0" stroke="#2A1A0A" stroke-width="0.94" fill="none" stroke-linecap="round"/><path d="M6.1 32.3 Q9.6 34.0 9.4 37.4" stroke="#2A1A0A" stroke-width="1.12" fill="none" stroke-linecap="round"/><path d="M8.0 48.2 Q9.8 48.8 12.0 49.1" stroke="#2A1A0A" stroke-width="1.41" fill="none" stroke-linecap="round"/><path d="M9.7 45.0 Q9.9 47.2 10.0 50.0" stroke="#2A1A0A" stroke-width="1.47" fill="none" stroke-linecap="round"/><path d="M7.5 42.9 Q10.2 41.9 12.6 44.8" stroke="#2A1A0A" stroke-width="1.23" fill="none" stroke-linecap="round"/><path d="M8.4 54.2 Q6.8 55.0 6.5 57.0" stroke="#2A1A0A" stroke-width="1.63" fill="none" stroke-linecap="round"/><path d="M9.8 51.7 Q11.3 51.0 9.1 54.2" stroke="#2A1A0A" stroke-width="1.20" fill="none" stroke-linecap="round"/><path d="M9.7 61.0 Q8.4 61.7 8.2 61.5" stroke="#2A1A0A" stroke-width="1.14" fill="none" stroke-linecap="round"/><path d="M8.4 64.7 Q8.0 65.1 5.7 67.0" stroke="#2A1A0A" stroke-width="1.08" fill="none" stroke-linecap="round"/><path d="M11.0 60.4 Q9.7 59.5 6.9 61.7" stroke="#2A1A0A" stroke-width="1.16" fill="none" stroke-linecap="round"/><path d="M21.3 12.2 Q17.7 14.3 16.4 15.8" stroke="#2A1A0A" stroke-width="1.12" fill="none" stroke-linecap="round"/><path d="M21.2 4.7 Q23.3 5.3 22.7 5.2" stroke="#2A1A0A" stroke-width="1.58" fill="none" stroke-linecap="round"/><path d="M18.4 11.2 Q17.8 12.2 16.4 13.8" stroke="#2A1A0A" stroke-width="1.31" fill="none" stroke-linecap="round"/><path d="M18.5 16.8 Q20.3 16.0 18.9 18.0" stroke="#2A1A0A" stroke-width="0.91" fill="none" stroke-linecap="round"/><path d="M22.2 20.6 Q24.3 23.0 22.9 21.9" stroke="#2A1A0A" stroke-width="1.08" fill="none" stroke-linecap="round"/><path d="M20.9 20.2 Q19.9 20.6 20.6 22.2" stroke="#2A1A0A" stroke-width="1.09" fill="none" stroke-linecap="round"/><path d="M22.3 23.4 Q21.2 22.7 17.6 21.9" stroke="#2A1A0A" stroke-width="1.06" fill="none" stroke-linecap="round"/><path d="M21.8 25.9 Q17.5 26.8 16.2 27.6" stroke="#2A1A0A" stroke-width="1.10" fill="none" stroke-linecap="round"/><path d="M16.5 26.8 Q14.8 27.7 16.2 31.6" stroke="#2A1A0A" stroke-width="1.67" fill="none" stroke-linecap="round"/><path d="M19.7 29.0 Q16.5 30.5 16.3 28.8" stroke="#2A1A0A" stroke-width="1.00" fill="none" stroke-linecap="round"/><path d="M22.0 38.0 Q22.4 38.6 21.8 36.2" stroke="#2A1A0A" stroke-width="0.95" fill="none" stroke-linecap="round"/><path d="M18.0 33.6 Q18.7 35.4 19.6 34.9" stroke="#2A1A0A" stroke-width="0.91" fill="none" stroke-linecap="round"/><path d="M16.7 32.5 Q18.6 33.2 16.7 31.2" stroke="#2A1A0A" stroke-width="0.98" fill="none" stroke-linecap="round"/><path d="M17.3 41.0 Q17.2 40.6 18.6 42.0" stroke="#2A1A0A" stroke-width="1.68" fill="none" stroke-linecap="round"/><path d="M19.0 41.5 Q18.6 43.5 15.9 44.9" stroke="#2A1A0A" stroke-width="0.94" fill="none" stroke-linecap="round"/><path d="M19.2 45.7 Q17.6 48.7 19.7 48.5" stroke="#2A1A0A" stroke-width="0.95" fill="none" stroke-linecap="round"/><path d="M18.3 57.1 Q17.4 55.4 18.8 55.5" stroke="#2A1A0A" stroke-width="1.37" fill="none" stroke-linecap="round"/><path d="M21.3 51.3 Q18.3 52.3 16.8 49.7" stroke="#2A1A0A" stroke-width="1.35" fill="none" stroke-linecap="round"/><path d="M21.7 50.4 Q22.2 54.3 20.8 55.4" stroke="#2A1A0A" stroke-width="1.32" fill="none" stroke-linecap="round"/><path d="M18.7 50.3 Q19.6 52.2 18.1 52.4" stroke="#2A1A0A" stroke-width="1.28" fill="none" stroke-linecap="round"/><path d="M16.6 59.2 Q15.3 59.6 16.5 63.7" stroke="#2A1A0A" stroke-width="1.57" fill="none" stroke-linecap="round"/><path d="M17.1 65.3 Q20.7 67.7 20.7 69.5" stroke="#2A1A0A" stroke-width="1.53" fill="none" stroke-linecap="round"/><path d="M16.6 64.7 Q16.5 67.3 19.5 68.0" stroke="#2A1A0A" stroke-width="1.64" fill="none" stroke-linecap="round"/><path d="M28.1 5.9 Q29.0 6.8 27.9 8.5" stroke="#2A1A0A" stroke-width="1.20" fill="none" stroke-linecap="round"/><path d="M29.1 7.3 Q29.1 8.6 29.1 6.1" stroke="#2A1A0A" stroke-width="1.23" fill="none" stroke-linecap="round"/><path d="M29.2 18.1 Q30.5 19.1 30.3 22.9" stroke="#2A1A0A" stroke-width="1.22" fill="none" stroke-linecap="round"/><path d="M32.1 14.8 Q31.7 17.4 29.7 16.4" stroke="#2A1A0A" stroke-width="1.37" fill="none" stroke-linecap="round"/><path d="M28.3 24.1 Q28.2 25.1 30.3 24.5" stroke="#2A1A0A" stroke-width="1.65" fill="none" stroke-linecap="round"/><path d="M28.5 28.2 Q29.1 29.4 29.1 32.5" stroke="#2A1A0A" stroke-width="1.08" fill="none" stroke-linecap="round"/><path d="M31.6 33.1 Q30.8 34.5 30.2 33.0" stroke="#2A1A0A" stroke-width="1.24" fill="none" stroke-linecap="round"/><path d="M30.9 37.1 Q30.9 38.9 27.6 39.5" stroke="#2A1A0A" stroke-width="0.93" fill="none" stroke-linecap="round"/><path d="M32.8 32.0 Q34.4 32.1 32.9 35.9" stroke="#2A1A0A" stroke-width="1.62" fill="none" stroke-linecap="round"/><path d="M37.3 6.2 Q38.9 7.1 38.2 10.8" stroke="#2A1A0A" stroke-width="1.40" fill="none" stroke-linecap="round"/><path d="M41.1 4.7 Q40.3 3.2 43.1 4.2" stroke="#2A1A0A" stroke-width="0.98" fill="none" stroke-linecap="round"/><path d="M41.8 5.4 Q38.2 7.6 38.3 10.2" stroke="#2A1A0A" stroke-width="1.48" fill="none" stroke-linecap="round"/><path d="M39.0 4.7 Q37.2 5.7 38.8 5.6" stroke="#2A1A0A" stroke-width="1.49" fill="none" stroke-linecap="round"/><path d="M40.3 14.4 Q37.8 17.5 38.4 17.4" stroke="#2A1A0A" stroke-width="1.62" fill="none" stroke-linecap="round"/><path d="M37.5 21.1 Q39.3 22.1 39.1 24.8" stroke="#2A1A0A" stroke-width="1.44" fill="none" stroke-linecap="round"/><path d="M37.6 30.1 Q38.3 31.9 38.8 32.4" stroke="#2A1A0A" stroke-width="1.31" fill="none" stroke-linecap="round"/><path d="M37.3 24.8 Q40.0 27.5 41.6 28.4" stroke="#2A1A0A" stroke-width="1.03" fill="none" stroke-linecap="round"/><path d="M39.2 29.9 Q39.7 31.1 39.7 28.9" stroke="#2A1A0A" stroke-width="1.41" fill="none" stroke-linecap="round"/><path d="M40.3 36.7 Q38.7 35.2 39.7 37.1" stroke="#2A1A0A" stroke-width="1.47" fill="none" stroke-linecap="round"/><path d="M41.6 35.8 Q40.7 35.8 41.7 36.6" stroke="#2A1A0A" stroke-width="1.59" fill="none" stroke-linecap="round"/><path d="M37.2 35.5 Q37.1 36.7 38.2 39.3" stroke="#2A1A0A" stroke-width="1.22" fill="none" stroke-linecap="round"/><path d="M39.1 47.3 Q36.5 45.8 37.2 47.5" stroke="#2A1A0A" stroke-width="1.52" fill="none" stroke-linecap="round"/><path d="M41.4 41.9 Q40.6 43.8 37.8 43.1" stroke="#2A1A0A" stroke-width="1.49" fill="none" stroke-linecap="round"/><path d="M42.2 55.9 Q40.0 57.1 40.3 55.3" stroke="#2A1A0A" stroke-width="1.20" fill="none" stroke-linecap="round"/><path d="M38.7 56.3 Q40.4 56.1 39.6 57.4" stroke="#2A1A0A" stroke-width="1.62" fill="none" stroke-linecap="round"/><path d="M42.9 64.0 Q40.7 66.6 38.6 68.4" stroke="#2A1A0A" stroke-width="1.48" fill="none" stroke-linecap="round"/><path d="M36.9 64.7 Q39.1 65.4 41.2 66.4" stroke="#2A1A0A" stroke-width="1.06" fill="none" stroke-linecap="round"/><path d="M40.2 58.8 Q39.9 60.4 40.0 61.6" stroke="#2A1A0A" stroke-width="1.66" fill="none" stroke-linecap="round"/><path d="M51.0 4.9 Q48.5 5.0 49.3 4.7" stroke="#2A1A0A" stroke-width="1.64" fill="none" stroke-linecap="round"/><path d="M49.2 11.5 Q51.9 11.5 51.7 10.7" stroke="#2A1A0A" stroke-width="1.63" fill="none" stroke-linecap="round"/><path d="M53.3 21.5 Q49.5 21.7 48.2 20.2" stroke="#2A1A0A" stroke-width="1.08" fill="none" stroke-linecap="round"/><path d="M49.1 19.8 Q50.2 21.5 49.6 24.1" stroke="#2A1A0A" stroke-width="1.28" fill="none" stroke-linecap="round"/><path d="M47.6 20.3 Q46.0 21.0 48.2 22.1" stroke="#2A1A0A" stroke-width="1.45" fill="none" stroke-linecap="round"/><path d="M49.9 17.1 Q49.8 17.0 47.0 17.2" stroke="#2A1A0A" stroke-width="1.19" fill="none" stroke-linecap="round"/><path d="M52.2 24.5 Q50.9 25.4 49.3 28.9" stroke="#2A1A0A" stroke-width="0.93" fill="none" stroke-linecap="round"/><path d="M50.8 26.5 Q51.5 25.9 51.3 25.7" stroke="#2A1A0A" stroke-width="1.05" fill="none" stroke-linecap="round"/><path d="M50.0 34.8 Q50.5 33.6 51.8 33.3" stroke="#2A1A0A" stroke-width="0.93" fill="none" stroke-linecap="round"/><path d="M53.2 33.2 Q48.9 34.5 47.4 34.8" stroke="#2A1A0A" stroke-width="1.18" fill="none" stroke-linecap="round"/><path d="M48.0 31.9 Q51.1 31.8 51.9 32.1" stroke="#2A1A0A" stroke-width="1.64" fill="none" stroke-linecap="round"/><path d="M50.7 40.7 Q49.2 41.6 49.1 46.0" stroke="#2A1A0A" stroke-width="1.25" fill="none" stroke-linecap="round"/><path d="M47.8 45.5 Q45.7 47.0 47.4 48.6" stroke="#2A1A0A" stroke-width="1.29" fill="none" stroke-linecap="round"/><path d="M52.8 51.1 Q54.4 53.6 53.7 52.7" stroke="#2A1A0A" stroke-width="1.64" fill="none" stroke-linecap="round"/><path d="M47.4 51.9 Q47.6 53.6 51.1 56.9" stroke="#2A1A0A" stroke-width="1.57" fill="none" stroke-linecap="round"/><path d="M47.9 52.6 Q50.2 52.9 49.1 55.7" stroke="#2A1A0A" stroke-width="1.49" fill="none" stroke-linecap="round"/><path d="M51.7 56.2 Q50.7 58.3 50.7 61.1" stroke="#2A1A0A" stroke-width="1.09" fill="none" stroke-linecap="round"/><path d="M49.3 65.1 Q51.5 67.7 50.3 68.7" stroke="#2A1A0A" stroke-width="1.65" fill="none" stroke-linecap="round"/><path d="M47.5 59.8 Q48.1 62.7 52.1 64.0" stroke="#2A1A0A" stroke-width="1.43" fill="none" stroke-linecap="round"/><path d="M49.2 63.3 Q51.3 60.8 52.5 61.9" stroke="#2A1A0A" stroke-width="1.27" fill="none" stroke-linecap="round"/><path d="M57.5 6.0 Q59.4 7.7 62.6 10.8" stroke="#2A1A0A" stroke-width="1.26" fill="none" stroke-linecap="round"/><path d="M62.6 6.2 Q64.0 7.3 61.9 11.4" stroke="#2A1A0A" stroke-width="1.68" fill="none" stroke-linecap="round"/><path d="M58.2 6.8 Q58.4 9.0 58.5 11.1" stroke="#2A1A0A" stroke-width="1.62" fill="none" stroke-linecap="round"/><path d="M62.3 17.2 Q63.1 16.9 61.5 15.7" stroke="#2A1A0A" stroke-width="1.58" fill="none" stroke-linecap="round"/><path d="M58.1 21.1 Q58.1 21.9 58.8 20.1" stroke="#2A1A0A" stroke-width="1.44" fill="none" stroke-linecap="round"/><path d="M58.2 17.4 Q59.6 19.6 61.8 20.6" stroke="#2A1A0A" stroke-width="1.52" fill="none" stroke-linecap="round"/><path d="M59.3 21.1 Q58.2 19.6 60.2 22.0" stroke="#2A1A0A" stroke-width="1.14" fill="none" stroke-linecap="round"/><path d="M59.6 26.4 Q59.5 27.2 57.5 28.6" stroke="#2A1A0A" stroke-width="1.42" fill="none" stroke-linecap="round"/><path d="M61.2 24.2 Q59.7 26.6 59.5 29.6" stroke="#2A1A0A" stroke-width="0.98" fill="none" stroke-linecap="round"/><path d="M58.8 23.8 Q62.8 27.4 63.7 27.2" stroke="#2A1A0A" stroke-width="1.39" fill="none" stroke-linecap="round"/><path d="M62.7 34.4 Q60.2 37.3 58.3 37.1" stroke="#2A1A0A" stroke-width="1.68" fill="none" stroke-linecap="round"/><path d="M60.4 36.2 Q56.9 40.3 57.2 41.3" stroke="#2A1A0A" stroke-width="0.93" fill="none" stroke-linecap="round"/><path d="M58.4 35.5 Q56.7 35.2 57.4 37.1" stroke="#2A1A0A" stroke-width="1.29" fill="none" stroke-linecap="round"/><path d="M57.7 35.2 Q56.6 36.9 58.4 39.1" stroke="#2A1A0A" stroke-width="1.62" fill="none" stroke-linecap="round"/><path d="M58.4 46.6 Q62.1 50.7 62.0 51.9" stroke="#2A1A0A" stroke-width="1.20" fill="none" stroke-linecap="round"/><path d="M58.5 43.0 Q59.6 43.4 60.3 45.0" stroke="#2A1A0A" stroke-width="1.58" fill="none" stroke-linecap="round"/><path d="M59.8 52.4 Q63.1 54.2 63.0 55.9" stroke="#2A1A0A" stroke-width="0.92" fill="none" stroke-linecap="round"/><path d="M61.4 50.7 Q57.3 55.1 57.1 55.7" stroke="#2A1A0A" stroke-width="1.53" fill="none" stroke-linecap="round"/><path d="M59.7 57.3 Q59.6 57.3 59.6 59.5" stroke="#2A1A0A" stroke-width="1.13" fill="none" stroke-linecap="round"/><path d="M61.2 65.0 Q61.4 65.1 60.2 65.1" stroke="#2A1A0A" stroke-width="1.47" fill="none" stroke-linecap="round"/><path d="M59.6 58.7 Q57.1 62.4 57.2 64.1" stroke="#2A1A0A" stroke-width="1.35" fill="none" stroke-linecap="round"/><path d="M70.9 11.2 Q69.7 9.4 71.2 11.4" stroke="#2A1A0A" stroke-width="1.41" fill="none" stroke-linecap="round"/><path d="M73.3 11.8 Q73.7 14.5 70.6 14.8" stroke="#2A1A0A" stroke-width="1.38" fill="none" stroke-linecap="round"/><path d="M70.3 8.6 Q70.1 10.4 68.5 8.2" stroke="#2A1A0A" stroke-width="1.34" fill="none" stroke-linecap="round"/><path d="M70.5 15.7 Q69.9 16.1 69.1 15.9" stroke="#2A1A0A" stroke-width="1.02" fill="none" stroke-linecap="round"/><path d="M68.0 17.4 Q68.8 17.2 68.9 18.9" stroke="#2A1A0A" stroke-width="1.16" fill="none" stroke-linecap="round"/><path d="M71.5 14.4 Q70.8 15.4 68.2 18.2" stroke="#2A1A0A" stroke-width="1.25" fill="none" stroke-linecap="round"/><path d="M70.9 29.7 Q71.3 32.8 74.2 32.5" stroke="#2A1A0A" stroke-width="1.05" fill="none" stroke-linecap="round"/><path d="M70.1 29.2 Q71.6 31.0 69.5 29.3" stroke="#2A1A0A" stroke-width="1.16" fill="none" stroke-linecap="round"/><path d="M68.0 34.8 Q69.1 39.0 70.2 39.5" stroke="#2A1A0A" stroke-width="1.49" fill="none" stroke-linecap="round"/><path d="M72.1 32.4 Q73.3 33.4 71.8 31.5" stroke="#2A1A0A" stroke-width="1.64" fill="none" stroke-linecap="round"/><path d="M73.8 37.1 Q71.9 38.9 70.4 42.3" stroke="#2A1A0A" stroke-width="1.35" fill="none" stroke-linecap="round"/><path d="M73.7 41.6 Q75.7 42.1 73.8 41.1" stroke="#2A1A0A" stroke-width="1.41" fill="none" stroke-linecap="round"/><path d="M68.6 40.9 Q69.4 41.9 72.7 40.4" stroke="#2A1A0A" stroke-width="1.59" fill="none" stroke-linecap="round"/><path d="M68.1 48.2 Q68.0 48.3 71.1 49.2" stroke="#2A1A0A" stroke-width="1.68" fill="none" stroke-linecap="round"/><path d="M68.5 51.8 Q69.7 56.1 70.0 56.8" stroke="#2A1A0A" stroke-width="0.92" fill="none" stroke-linecap="round"/><path d="M70.1 50.6 Q70.6 51.5 70.7 49.3" stroke="#2A1A0A" stroke-width="0.99" fill="none" stroke-linecap="round"/><path d="M67.9 61.2 Q70.5 63.0 72.6 65.1" stroke="#2A1A0A" stroke-width="1.33" fill="none" stroke-linecap="round"/><path d="M70.5 62.8 Q72.3 64.3 73.3 62.4" stroke="#2A1A0A" stroke-width="1.57" fill="none" stroke-linecap="round"/><path d="M68.9 66.3 Q70.2 64.8 73.3 65.7" stroke="#2A1A0A" stroke-width="0.95" fill="none" stroke-linecap="round"/></svg></div><svg style="left:33px;top:101px" width="103" height="4"><path d="M0 1 L103 1" stroke="#BBB" stroke-width="1"/></svg><svg style="left:33px;top:105px" width="60" height="4"><path d="M0 1 L60 1" stroke="#BBB" stroke-width="1"/></svg></div>
<div class="abs" style="left:73px;top:394px;width:151px;height:113px;background:#fff;border:1px solid #E0E0E0"></div>
<div class="abs" style="left:73px;top:394px;width:151px;height:113px;overflow:hidden"><div class="t" style="left:7px;top:7px;font-size:7.7px;font-weight:700;color:#000">9. 文彰：吴门书派“后劲”</div><div class="abs" style="left:38px;top:18px;width:79px;height:80px;background:#D6BC9A;overflow:hidden"><svg style="left:0;top:0;opacity:0.85;filter:blur(0.3px)" width="79" height="80"><path d="M11.8 11.2 Q11.8 12.0 12.1 9.4" stroke="#2A1A0A" stroke-width="1.53" fill="none" stroke-linecap="round"/><path d="M11.5 5.5 Q10.4 5.8 8.9 5.5" stroke="#2A1A0A" stroke-width="0.99" fill="none" stroke-linecap="round"/><path d="M7.3 7.0 Q8.3 10.3 12.0 11.1" stroke="#2A1A0A" stroke-width="1.10" fill="none" stroke-linecap="round"/><path d="M9.8 5.6 Q6.5 7.0 5.5 10.6" stroke="#2A1A0A" stroke-width="1.81" fill="none" stroke-linecap="round"/><path d="M7.9 16.3 Q8.6 19.7 11.7 19.3" stroke="#2A1A0A" stroke-width="1.15" fill="none" stroke-linecap="round"/><path d="M11.9 17.9 Q10.5 17.7 5.7 19.3" stroke="#2A1A0A" stroke-width="1.26" fill="none" stroke-linecap="round"/><path d="M11.0 19.8 Q8.6 21.0 9.8 23.4" stroke="#2A1A0A" stroke-width="1.24" fill="none" stroke-linecap="round"/><path d="M9.0 30.8 Q5.5 34.7 5.9 36.6" stroke="#2A1A0A" stroke-width="1.69" fill="none" stroke-linecap="round"/><path d="M6.1 31.6 Q5.2 31.1 8.1 34.2" stroke="#2A1A0A" stroke-width="1.13" fill="none" stroke-linecap="round"/><path d="M11.7 53.0 Q9.9 54.5 8.0 53.8" stroke="#2A1A0A" stroke-width="1.07" fill="none" stroke-linecap="round"/><path d="M10.6 51.7 Q12.9 49.2 11.6 50.0" stroke="#2A1A0A" stroke-width="1.27" fill="none" stroke-linecap="round"/><path d="M8.1 62.8 Q8.0 61.8 9.4 63.3" stroke="#2A1A0A" stroke-width="1.05" fill="none" stroke-linecap="round"/><path d="M6.9 60.7 Q8.0 62.3 12.6 60.0" stroke="#2A1A0A" stroke-width="1.43" fill="none" stroke-linecap="round"/><path d="M10.5 67.6 Q7.5 71.1 7.3 70.8" stroke="#2A1A0A" stroke-width="1.52" fill="none" stroke-linecap="round"/><path d="M10.9 67.5 Q9.2 69.0 7.0 73.4" stroke="#2A1A0A" stroke-width="1.73" fill="none" stroke-linecap="round"/><path d="M17.1 12.1 Q19.4 14.3 17.8 13.7" stroke="#2A1A0A" stroke-width="1.80" fill="none" stroke-linecap="round"/><path d="M18.9 8.9 Q19.1 9.4 20.8 10.7" stroke="#2A1A0A" stroke-width="1.10" fill="none" stroke-linecap="round"/><path d="M18.5 13.4 Q20.5 14.3 22.5 16.4" stroke="#2A1A0A" stroke-width="1.05" fill="none" stroke-linecap="round"/><path d="M21.5 17.8 Q22.1 20.5 21.2 22.0" stroke="#2A1A0A" stroke-width="1.62" fill="none" stroke-linecap="round"/><path d="M18.4 20.8 Q19.1 22.5 17.7 22.7" stroke="#2A1A0A" stroke-width="1.23" fill="none" stroke-linecap="round"/><path d="M21.9 20.3 Q21.0 18.4 19.8 18.4" stroke="#2A1A0A" stroke-width="1.54" fill="none" stroke-linecap="round"/><path d="M19.0 21.9 Q19.0 24.6 20.3 26.2" stroke="#2A1A0A" stroke-width="1.60" fill="none" stroke-linecap="round"/><path d="M21.8 26.1 Q21.3 26.2 21.8 27.7" stroke="#2A1A0A" stroke-width="1.10" fill="none" stroke-linecap="round"/><path d="M22.1 26.3 Q19.3 27.0 18.2 31.1" stroke="#2A1A0A" stroke-width="1.54" fill="none" stroke-linecap="round"/><path d="M18.7 30.1 Q22.3 30.3 22.3 32.2" stroke="#2A1A0A" stroke-width="1.44" fill="none" stroke-linecap="round"/><path d="M20.6 34.7 Q19.3 34.4 16.8 36.3" stroke="#2A1A0A" stroke-width="1.56" fill="none" stroke-linecap="round"/><path d="M20.0 34.9 Q17.7 33.3 19.0 34.7" stroke="#2A1A0A" stroke-width="1.25" fill="none" stroke-linecap="round"/><path d="M17.3 36.2 Q16.1 37.5 15.9 38.0" stroke="#2A1A0A" stroke-width="1.48" fill="none" stroke-linecap="round"/><path d="M16.2 48.1 Q15.4 50.1 17.6 49.4" stroke="#2A1A0A" stroke-width="1.29" fill="none" stroke-linecap="round"/><path d="M16.4 50.0 Q15.7 51.5 16.3 52.4" stroke="#2A1A0A" stroke-width="1.78" fill="none" stroke-linecap="round"/><path d="M21.2 48.3 Q20.8 48.4 21.4 51.4" stroke="#2A1A0A" stroke-width="1.48" fill="none" stroke-linecap="round"/><path d="M22.1 60.0 Q18.1 61.0 18.2 65.1" stroke="#2A1A0A" stroke-width="1.46" fill="none" stroke-linecap="round"/><path d="M19.9 55.8 Q19.5 58.1 20.1 60.9" stroke="#2A1A0A" stroke-width="1.17" fill="none" stroke-linecap="round"/><path d="M18.5 73.2 Q19.4 76.5 22.2 75.9" stroke="#2A1A0A" stroke-width="1.40" fill="none" stroke-linecap="round"/><path d="M18.7 67.4 Q19.8 68.2 22.7 69.3" stroke="#2A1A0A" stroke-width="1.08" fill="none" stroke-linecap="round"/><path d="M20.0 68.5 Q20.2 68.7 17.7 72.7" stroke="#2A1A0A" stroke-width="1.43" fill="none" stroke-linecap="round"/><path d="M17.8 72.9 Q18.6 71.5 21.2 72.9" stroke="#2A1A0A" stroke-width="1.81" fill="none" stroke-linecap="round"/><path d="M29.5 12.3 Q28.8 13.4 32.1 17.4" stroke="#2A1A0A" stroke-width="1.22" fill="none" stroke-linecap="round"/><path d="M30.6 10.0 Q30.2 9.9 31.0 8.2" stroke="#2A1A0A" stroke-width="1.66" fill="none" stroke-linecap="round"/><path d="M27.1 4.5 Q26.9 7.0 29.7 8.0" stroke="#2A1A0A" stroke-width="1.14" fill="none" stroke-linecap="round"/><path d="M29.9 20.7 Q32.7 23.7 32.6 23.9" stroke="#2A1A0A" stroke-width="1.38" fill="none" stroke-linecap="round"/><path d="M30.5 21.0 Q32.4 21.1 32.2 22.7" stroke="#2A1A0A" stroke-width="0.98" fill="none" stroke-linecap="round"/><path d="M31.1 19.7 Q30.0 19.3 30.4 21.5" stroke="#2A1A0A" stroke-width="1.56" fill="none" stroke-linecap="round"/><path d="M29.6 28.3 Q30.6 26.6 29.7 26.7" stroke="#2A1A0A" stroke-width="1.05" fill="none" stroke-linecap="round"/><path d="M26.7 33.0 Q25.7 33.3 28.2 34.4" stroke="#2A1A0A" stroke-width="1.39" fill="none" stroke-linecap="round"/><path d="M27.1 25.6 Q27.1 29.5 30.2 30.2" stroke="#2A1A0A" stroke-width="1.82" fill="none" stroke-linecap="round"/><path d="M27.2 40.0 Q28.5 37.8 28.7 39.3" stroke="#2A1A0A" stroke-width="1.07" fill="none" stroke-linecap="round"/><path d="M28.6 35.1 Q28.4 38.0 26.2 37.8" stroke="#2A1A0A" stroke-width="1.09" fill="none" stroke-linecap="round"/><path d="M28.9 37.3 Q31.3 37.8 30.1 39.2" stroke="#2A1A0A" stroke-width="1.03" fill="none" stroke-linecap="round"/><path d="M29.8 50.6 Q29.0 52.3 27.9 56.1" stroke="#2A1A0A" stroke-width="1.03" fill="none" stroke-linecap="round"/><path d="M27.7 52.0 Q29.0 56.3 27.8 57.8" stroke="#2A1A0A" stroke-width="1.36" fill="none" stroke-linecap="round"/><path d="M30.7 60.4 Q26.9 60.6 26.4 63.7" stroke="#2A1A0A" stroke-width="1.48" fill="none" stroke-linecap="round"/><path d="M27.8 62.4 Q29.7 60.8 29.2 63.0" stroke="#2A1A0A" stroke-width="1.59" fill="none" stroke-linecap="round"/><path d="M32.1 68.4 Q30.1 72.0 31.4 72.4" stroke="#2A1A0A" stroke-width="1.39" fill="none" stroke-linecap="round"/><path d="M27.6 70.8 Q27.2 74.9 28.5 75.5" stroke="#2A1A0A" stroke-width="1.57" fill="none" stroke-linecap="round"/><path d="M41.5 10.3 Q43.0 11.1 41.7 11.8" stroke="#2A1A0A" stroke-width="1.48" fill="none" stroke-linecap="round"/><path d="M39.9 11.2 Q37.5 9.4 38.8 9.9" stroke="#2A1A0A" stroke-width="1.01" fill="none" stroke-linecap="round"/><path d="M41.9 8.8 Q41.5 9.4 41.3 6.8" stroke="#2A1A0A" stroke-width="1.50" fill="none" stroke-linecap="round"/><path d="M39.1 8.7 Q36.5 7.8 36.7 7.9" stroke="#2A1A0A" stroke-width="1.30" fill="none" stroke-linecap="round"/><path d="M39.8 15.5 Q41.5 15.6 41.8 19.5" stroke="#2A1A0A" stroke-width="1.73" fill="none" stroke-linecap="round"/><path d="M38.6 21.3 Q36.5 20.3 38.2 19.7" stroke="#2A1A0A" stroke-width="1.69" fill="none" stroke-linecap="round"/><path d="M38.4 28.6 Q36.2 32.4 37.7 34.5" stroke="#2A1A0A" stroke-width="1.46" fill="none" stroke-linecap="round"/><path d="M40.5 30.1 Q42.2 30.6 42.4 33.7" stroke="#2A1A0A" stroke-width="1.28" fill="none" stroke-linecap="round"/><path d="M36.9 33.4 Q36.8 34.4 39.3 37.6" stroke="#2A1A0A" stroke-width="1.02" fill="none" stroke-linecap="round"/><path d="M40.2 31.0 Q38.8 32.6 37.9 32.7" stroke="#2A1A0A" stroke-width="1.12" fill="none" stroke-linecap="round"/><path d="M39.9 43.0 Q41.7 41.3 41.0 42.9" stroke="#2A1A0A" stroke-width="1.38" fill="none" stroke-linecap="round"/><path d="M40.6 40.3 Q38.2 43.8 39.5 44.6" stroke="#2A1A0A" stroke-width="1.35" fill="none" stroke-linecap="round"/><path d="M40.4 42.4 Q42.3 42.7 42.7 41.9" stroke="#2A1A0A" stroke-width="1.14" fill="none" stroke-linecap="round"/><path d="M37.9 42.8 Q41.7 40.8 41.6 41.5" stroke="#2A1A0A" stroke-width="1.04" fill="none" stroke-linecap="round"/><path d="M36.6 49.4 Q37.5 51.1 39.4 51.9" stroke="#2A1A0A" stroke-width="1.59" fill="none" stroke-linecap="round"/><path d="M42.0 47.3 Q39.5 48.0 39.1 51.9" stroke="#2A1A0A" stroke-width="1.24" fill="none" stroke-linecap="round"/><path d="M37.0 51.5 Q37.9 50.0 41.8 52.0" stroke="#2A1A0A" stroke-width="1.19" fill="none" stroke-linecap="round"/><path d="M37.0 48.4 Q36.8 49.1 40.0 48.3" stroke="#2A1A0A" stroke-width="1.02" fill="none" stroke-linecap="round"/><path d="M41.8 62.5 Q38.7 65.6 36.5 66.6" stroke="#2A1A0A" stroke-width="0.98" fill="none" stroke-linecap="round"/><path d="M38.2 63.0 Q36.1 62.8 36.9 61.2" stroke="#2A1A0A" stroke-width="1.64" fill="none" stroke-linecap="round"/><path d="M36.6 54.9 Q39.0 54.6 39.0 53.8" stroke="#2A1A0A" stroke-width="1.25" fill="none" stroke-linecap="round"/><path d="M38.1 70.6 Q39.1 70.1 38.0 69.1" stroke="#2A1A0A" stroke-width="1.00" fill="none" stroke-linecap="round"/><path d="M36.8 65.7 Q39.4 68.6 38.5 70.5" stroke="#2A1A0A" stroke-width="1.17" fill="none" stroke-linecap="round"/><path d="M48.8 6.0 Q51.6 4.7 50.5 5.3" stroke="#2A1A0A" stroke-width="1.49" fill="none" stroke-linecap="round"/><path d="M50.4 5.8 Q50.7 5.9 51.5 7.3" stroke="#2A1A0A" stroke-width="1.35" fill="none" stroke-linecap="round"/><path d="M48.0 9.9 Q48.3 7.7 47.3 8.3" stroke="#2A1A0A" stroke-width="1.38" fill="none" stroke-linecap="round"/><path d="M47.2 21.8 Q50.1 19.2 49.1 20.2" stroke="#2A1A0A" stroke-width="1.46" fill="none" stroke-linecap="round"/><path d="M49.5 22.4 Q48.3 21.1 48.9 22.2" stroke="#2A1A0A" stroke-width="1.45" fill="none" stroke-linecap="round"/><path d="M48.8 31.8 Q52.0 31.7 51.9 35.1" stroke="#2A1A0A" stroke-width="1.40" fill="none" stroke-linecap="round"/><path d="M48.7 25.8 Q46.6 25.9 47.8 26.8" stroke="#2A1A0A" stroke-width="1.61" fill="none" stroke-linecap="round"/><path d="M51.4 41.3 Q50.6 40.5 49.5 43.1" stroke="#2A1A0A" stroke-width="1.15" fill="none" stroke-linecap="round"/><path d="M50.8 35.4 Q51.8 35.0 50.4 38.4" stroke="#2A1A0A" stroke-width="1.55" fill="none" stroke-linecap="round"/><path d="M48.9 48.8 Q51.9 50.6 51.1 50.0" stroke="#2A1A0A" stroke-width="1.76" fill="none" stroke-linecap="round"/><path d="M50.8 50.5 Q49.8 53.1 49.9 54.9" stroke="#2A1A0A" stroke-width="1.55" fill="none" stroke-linecap="round"/><path d="M49.8 47.1 Q47.6 46.7 46.6 45.8" stroke="#2A1A0A" stroke-width="1.62" fill="none" stroke-linecap="round"/><path d="M50.9 47.3 Q52.7 45.6 52.7 47.5" stroke="#2A1A0A" stroke-width="1.61" fill="none" stroke-linecap="round"/><path d="M52.1 60.7 Q52.5 61.5 52.0 64.6" stroke="#2A1A0A" stroke-width="1.41" fill="none" stroke-linecap="round"/><path d="M52.1 56.7 Q52.1 55.8 53.0 59.0" stroke="#2A1A0A" stroke-width="1.31" fill="none" stroke-linecap="round"/><path d="M47.7 60.4 Q50.5 62.6 52.5 65.7" stroke="#2A1A0A" stroke-width="1.07" fill="none" stroke-linecap="round"/><path d="M50.8 73.4 Q48.5 73.9 47.9 72.2" stroke="#2A1A0A" stroke-width="1.65" fill="none" stroke-linecap="round"/><path d="M47.1 73.1 Q45.6 74.3 46.6 74.4" stroke="#2A1A0A" stroke-width="1.46" fill="none" stroke-linecap="round"/><path d="M50.4 70.3 Q49.1 70.8 50.0 71.5" stroke="#2A1A0A" stroke-width="1.48" fill="none" stroke-linecap="round"/><path d="M48.1 68.3 Q46.7 70.5 46.7 73.4" stroke="#2A1A0A" stroke-width="1.11" fill="none" stroke-linecap="round"/><path d="M57.9 6.2 Q59.9 8.7 60.5 9.4" stroke="#2A1A0A" stroke-width="1.03" fill="none" stroke-linecap="round"/><path d="M59.7 12.0 Q62.8 12.9 63.0 12.6" stroke="#2A1A0A" stroke-width="1.76" fill="none" stroke-linecap="round"/><path d="M58.1 10.8 Q58.6 10.5 62.2 12.6" stroke="#2A1A0A" stroke-width="1.11" fill="none" stroke-linecap="round"/><path d="M57.3 5.9 Q60.0 6.2 60.6 4.7" stroke="#2A1A0A" stroke-width="1.67" fill="none" stroke-linecap="round"/><path d="M62.2 19.4 Q62.8 21.4 60.4 24.4" stroke="#2A1A0A" stroke-width="1.66" fill="none" stroke-linecap="round"/><path d="M57.9 17.4 Q59.6 21.0 57.5 22.5" stroke="#2A1A0A" stroke-width="1.19" fill="none" stroke-linecap="round"/><path d="M62.5 18.7 Q61.2 20.1 56.3 24.5" stroke="#2A1A0A" stroke-width="0.98" fill="none" stroke-linecap="round"/><path d="M59.1 17.6 Q62.0 19.4 61.5 19.5" stroke="#2A1A0A" stroke-width="0.99" fill="none" stroke-linecap="round"/><path d="M61.3 26.3 Q61.6 26.4 58.7 25.4" stroke="#2A1A0A" stroke-width="1.62" fill="none" stroke-linecap="round"/><path d="M57.3 25.5 Q56.5 28.0 59.1 31.0" stroke="#2A1A0A" stroke-width="1.17" fill="none" stroke-linecap="round"/><path d="M62.7 26.9 Q63.9 26.7 61.3 26.1" stroke="#2A1A0A" stroke-width="1.34" fill="none" stroke-linecap="round"/><path d="M61.9 36.7 Q59.0 37.5 59.4 35.7" stroke="#2A1A0A" stroke-width="1.10" fill="none" stroke-linecap="round"/><path d="M61.7 34.7 Q62.4 35.8 60.2 40.3" stroke="#2A1A0A" stroke-width="1.80" fill="none" stroke-linecap="round"/><path d="M57.9 41.7 Q58.9 43.2 56.3 43.9" stroke="#2A1A0A" stroke-width="1.68" fill="none" stroke-linecap="round"/><path d="M57.1 48.0 Q59.8 50.4 61.8 49.5" stroke="#2A1A0A" stroke-width="1.52" fill="none" stroke-linecap="round"/><path d="M60.6 44.8 Q58.2 48.4 56.4 49.0" stroke="#2A1A0A" stroke-width="1.67" fill="none" stroke-linecap="round"/><path d="M56.8 61.8 Q56.3 61.0 57.4 62.5" stroke="#2A1A0A" stroke-width="1.68" fill="none" stroke-linecap="round"/><path d="M57.2 57.8 Q56.7 57.0 59.0 57.4" stroke="#2A1A0A" stroke-width="0.98" fill="none" stroke-linecap="round"/><path d="M60.6 61.4 Q61.9 58.9 61.6 60.0" stroke="#2A1A0A" stroke-width="1.32" fill="none" stroke-linecap="round"/><path d="M56.9 72.0 Q58.5 72.3 63.1 74.7" stroke="#2A1A0A" stroke-width="1.75" fill="none" stroke-linecap="round"/><path d="M62.4 64.8 Q59.1 66.5 57.5 66.2" stroke="#2A1A0A" stroke-width="1.29" fill="none" stroke-linecap="round"/><path d="M61.5 65.9 Q61.5 67.1 59.9 71.7" stroke="#2A1A0A" stroke-width="1.07" fill="none" stroke-linecap="round"/><path d="M60.7 67.9 Q60.1 70.6 58.9 69.7" stroke="#2A1A0A" stroke-width="1.18" fill="none" stroke-linecap="round"/><path d="M67.0 8.0 Q65.7 7.7 68.1 11.3" stroke="#2A1A0A" stroke-width="1.16" fill="none" stroke-linecap="round"/><path d="M68.3 10.9 Q69.4 10.1 68.1 11.4" stroke="#2A1A0A" stroke-width="1.56" fill="none" stroke-linecap="round"/><path d="M72.3 11.5 Q69.7 10.7 70.3 13.0" stroke="#2A1A0A" stroke-width="1.74" fill="none" stroke-linecap="round"/><path d="M70.3 7.0 Q70.0 7.9 70.5 9.7" stroke="#2A1A0A" stroke-width="1.69" fill="none" stroke-linecap="round"/><path d="M67.4 18.5 Q69.0 21.4 71.6 20.8" stroke="#2A1A0A" stroke-width="1.23" fill="none" stroke-linecap="round"/><path d="M70.2 22.0 Q68.8 22.6 67.4 22.8" stroke="#2A1A0A" stroke-width="1.15" fill="none" stroke-linecap="round"/><path d="M69.6 15.0 Q66.9 17.3 67.0 15.8" stroke="#2A1A0A" stroke-width="1.20" fill="none" stroke-linecap="round"/><path d="M68.6 21.6 Q71.4 22.1 71.6 21.7" stroke="#2A1A0A" stroke-width="1.31" fill="none" stroke-linecap="round"/><path d="M71.2 29.8 Q73.2 32.9 72.6 35.1" stroke="#2A1A0A" stroke-width="1.46" fill="none" stroke-linecap="round"/><path d="M72.4 27.7 Q70.6 29.0 67.3 29.3" stroke="#2A1A0A" stroke-width="1.55" fill="none" stroke-linecap="round"/><path d="M70.5 35.6 Q71.4 35.9 71.5 38.4" stroke="#2A1A0A" stroke-width="1.78" fill="none" stroke-linecap="round"/><path d="M67.6 35.1 Q67.7 34.3 71.2 33.8" stroke="#2A1A0A" stroke-width="1.53" fill="none" stroke-linecap="round"/><path d="M72.0 53.1 Q71.2 52.4 71.2 53.3" stroke="#2A1A0A" stroke-width="1.36" fill="none" stroke-linecap="round"/><path d="M68.7 52.4 Q68.7 53.6 68.7 55.7" stroke="#2A1A0A" stroke-width="1.53" fill="none" stroke-linecap="round"/><path d="M72.6 47.3 Q70.3 50.1 70.7 49.0" stroke="#2A1A0A" stroke-width="1.52" fill="none" stroke-linecap="round"/><path d="M69.5 49.2 Q71.0 47.6 69.2 48.7" stroke="#2A1A0A" stroke-width="1.40" fill="none" stroke-linecap="round"/><path d="M72.4 55.8 Q70.5 58.4 68.3 57.8" stroke="#2A1A0A" stroke-width="1.45" fill="none" stroke-linecap="round"/><path d="M70.9 58.3 Q70.6 59.1 71.9 63.0" stroke="#2A1A0A" stroke-width="1.20" fill="none" stroke-linecap="round"/><path d="M69.1 62.5 Q69.2 65.8 68.3 65.5" stroke="#2A1A0A" stroke-width="1.08" fill="none" stroke-linecap="round"/><path d="M67.5 72.3 Q66.6 75.5 68.4 76.4" stroke="#2A1A0A" stroke-width="1.44" fill="none" stroke-linecap="round"/><path d="M67.9 67.5 Q71.3 68.4 71.8 66.3" stroke="#2A1A0A" stroke-width="1.24" fill="none" stroke-linecap="round"/><path d="M68.7 67.5 Q69.3 66.4 73.5 68.8" stroke="#2A1A0A" stroke-width="1.01" fill="none" stroke-linecap="round"/></svg></div><svg style="left:33px;top:103px" width="103" height="4"><path d="M0 1 L103 1" stroke="#BBB" stroke-width="1"/></svg><svg style="left:33px;top:107px" width="60" height="4"><path d="M0 1 L60 1" stroke="#BBB" stroke-width="1"/></svg></div>
<div class="abs" style="left:73px;top:534px;width:151px;height:113px;background:#fff;border:1px solid #E0E0E0"></div>
<div class="abs" style="left:73px;top:534px;width:151px;height:113px;overflow:hidden"><div class="t" style="left:7px;top:7px;font-size:7.7px;font-weight:700;color:#000">10. 吴应卿：吴门书派“后劲”</div><div class="abs" style="left:21px;top:19px;width:104px;height:34px;background:#D8D6D0;overflow:hidden"><svg style="left:0;top:0;opacity:0.85;filter:blur(0.3px)" width="104" height="34"><path d="M5.6 7.9 Q7.2 7.5 5.5 9.3" stroke="#111" stroke-width="0.83" fill="none" stroke-linecap="round"/><path d="M7.1 5.3 Q7.6 6.7 7.7 4.6" stroke="#111" stroke-width="1.19" fill="none" stroke-linecap="round"/><path d="M7.8 4.5 Q6.7 4.4 7.8 3.7" stroke="#111" stroke-width="0.86" fill="none" stroke-linecap="round"/><path d="M7.1 6.7 Q8.2 5.7 7.8 7.9" stroke="#111" stroke-width="1.15" fill="none" stroke-linecap="round"/><path d="M7.6 9.5 Q7.2 9.2 5.3 9.4" stroke="#111" stroke-width="0.98" fill="none" stroke-linecap="round"/><path d="M7.8 11.3 Q7.9 11.4 6.5 13.5" stroke="#111" stroke-width="1.15" fill="none" stroke-linecap="round"/><path d="M8.4 15.5 Q8.7 16.3 9.7 15.0" stroke="#111" stroke-width="0.87" fill="none" stroke-linecap="round"/><path d="M7.4 14.4 Q8.1 17.0 8.2 16.5" stroke="#111" stroke-width="0.98" fill="none" stroke-linecap="round"/><path d="M8.2 16.9 Q9.4 19.1 7.8 17.7" stroke="#111" stroke-width="1.08" fill="none" stroke-linecap="round"/><path d="M8.4 20.6 Q7.9 22.4 7.8 22.4" stroke="#111" stroke-width="1.36" fill="none" stroke-linecap="round"/><path d="M6.8 23.5 Q6.7 23.1 6.7 24.9" stroke="#111" stroke-width="0.96" fill="none" stroke-linecap="round"/><path d="M7.0 28.2 Q6.4 30.1 5.4 29.0" stroke="#111" stroke-width="1.31" fill="none" stroke-linecap="round"/><path d="M8.9 25.5 Q9.5 27.6 7.0 25.9" stroke="#111" stroke-width="0.87" fill="none" stroke-linecap="round"/><path d="M6.1 25.3 Q6.5 24.8 6.1 26.2" stroke="#111" stroke-width="0.77" fill="none" stroke-linecap="round"/><path d="M13.5 4.8 Q15.4 7.2 16.0 7.6" stroke="#111" stroke-width="1.07" fill="none" stroke-linecap="round"/><path d="M15.8 8.5 Q15.1 8.7 15.2 9.8" stroke="#111" stroke-width="1.09" fill="none" stroke-linecap="round"/><path d="M13.9 5.1 Q13.7 5.9 16.6 5.9" stroke="#111" stroke-width="0.84" fill="none" stroke-linecap="round"/><path d="M14.6 6.7 Q13.8 6.2 16.4 8.1" stroke="#111" stroke-width="1.02" fill="none" stroke-linecap="round"/><path d="M14.7 11.4 Q15.5 11.8 12.4 12.3" stroke="#111" stroke-width="0.98" fill="none" stroke-linecap="round"/><path d="M12.8 12.6 Q14.9 13.1 15.4 13.5" stroke="#111" stroke-width="0.91" fill="none" stroke-linecap="round"/><path d="M16.1 10.9 Q16.7 11.4 15.2 13.5" stroke="#111" stroke-width="1.19" fill="none" stroke-linecap="round"/><path d="M14.4 18.3 Q14.1 18.3 13.6 18.2" stroke="#111" stroke-width="1.19" fill="none" stroke-linecap="round"/><path d="M14.8 17.8 Q14.1 17.3 15.5 17.6" stroke="#111" stroke-width="1.30" fill="none" stroke-linecap="round"/><path d="M13.1 16.5 Q15.4 17.8 15.4 19.4" stroke="#111" stroke-width="0.90" fill="none" stroke-linecap="round"/><path d="M14.1 23.5 Q14.8 23.8 16.6 26.3" stroke="#111" stroke-width="0.92" fill="none" stroke-linecap="round"/><path d="M13.0 20.2 Q15.3 21.4 14.9 22.8" stroke="#111" stroke-width="1.20" fill="none" stroke-linecap="round"/><path d="M15.5 19.6 Q16.4 22.0 15.1 22.3" stroke="#111" stroke-width="1.09" fill="none" stroke-linecap="round"/><path d="M13.6 27.9 Q14.7 29.9 16.5 28.4" stroke="#111" stroke-width="1.25" fill="none" stroke-linecap="round"/><path d="M12.9 24.8 Q14.0 24.7 12.6 27.4" stroke="#111" stroke-width="1.32" fill="none" stroke-linecap="round"/><path d="M16.3 27.2 Q13.4 25.9 13.6 28.4" stroke="#111" stroke-width="1.41" fill="none" stroke-linecap="round"/><path d="M14.9 26.6 Q17.1 28.3 16.4 27.4" stroke="#111" stroke-width="0.91" fill="none" stroke-linecap="round"/><path d="M22.2 5.7 Q20.0 7.8 21.4 8.1" stroke="#111" stroke-width="1.36" fill="none" stroke-linecap="round"/><path d="M21.8 7.9 Q23.0 7.6 21.2 10.2" stroke="#111" stroke-width="0.87" fill="none" stroke-linecap="round"/><path d="M22.3 12.0 Q20.9 12.3 22.5 11.6" stroke="#111" stroke-width="0.85" fill="none" stroke-linecap="round"/><path d="M19.3 12.3 Q21.4 14.3 21.3 13.3" stroke="#111" stroke-width="0.81" fill="none" stroke-linecap="round"/><path d="M19.9 9.4 Q17.7 11.4 19.2 10.2" stroke="#111" stroke-width="0.81" fill="none" stroke-linecap="round"/><path d="M21.6 15.1 Q22.1 15.7 20.1 16.2" stroke="#111" stroke-width="0.93" fill="none" stroke-linecap="round"/><path d="M21.2 18.2 Q23.8 18.3 23.2 20.9" stroke="#111" stroke-width="1.07" fill="none" stroke-linecap="round"/><path d="M20.8 16.0 Q20.2 15.7 20.3 17.7" stroke="#111" stroke-width="0.97" fill="none" stroke-linecap="round"/><path d="M19.6 17.7 Q20.9 17.5 23.3 19.3" stroke="#111" stroke-width="0.86" fill="none" stroke-linecap="round"/><path d="M23.0 21.0 Q23.4 21.2 21.1 24.0" stroke="#111" stroke-width="1.05" fill="none" stroke-linecap="round"/><path d="M21.2 20.8 Q21.3 19.0 19.7 21.1" stroke="#111" stroke-width="1.14" fill="none" stroke-linecap="round"/><path d="M20.9 19.3 Q20.7 18.3 20.3 20.8" stroke="#111" stroke-width="1.42" fill="none" stroke-linecap="round"/><path d="M22.3 23.6 Q18.9 24.8 19.2 23.7" stroke="#111" stroke-width="0.95" fill="none" stroke-linecap="round"/><path d="M22.6 27.3 Q23.1 27.7 23.3 27.9" stroke="#111" stroke-width="1.10" fill="none" stroke-linecap="round"/><path d="M20.4 25.5 Q23.1 24.4 22.6 25.2" stroke="#111" stroke-width="0.78" fill="none" stroke-linecap="round"/><path d="M19.5 25.4 Q19.6 23.9 21.7 25.3" stroke="#111" stroke-width="0.78" fill="none" stroke-linecap="round"/><path d="M28.5 4.4 Q30.6 4.9 29.0 7.2" stroke="#111" stroke-width="0.89" fill="none" stroke-linecap="round"/><path d="M29.8 7.1 Q28.7 7.7 28.1 6.9" stroke="#111" stroke-width="0.95" fill="none" stroke-linecap="round"/><path d="M29.2 8.7 Q27.5 10.2 25.8 7.8" stroke="#111" stroke-width="1.11" fill="none" stroke-linecap="round"/><path d="M26.4 12.9 Q28.4 13.0 27.7 13.9" stroke="#111" stroke-width="1.10" fill="none" stroke-linecap="round"/><path d="M28.8 13.7 Q28.8 15.4 27.2 16.0" stroke="#111" stroke-width="1.04" fill="none" stroke-linecap="round"/><path d="M27.4 9.5 Q27.8 8.2 26.2 8.8" stroke="#111" stroke-width="0.88" fill="none" stroke-linecap="round"/><path d="M29.5 17.3 Q27.4 17.1 27.0 17.2" stroke="#111" stroke-width="0.87" fill="none" stroke-linecap="round"/><path d="M27.8 15.4 Q29.2 15.9 30.2 18.3" stroke="#111" stroke-width="1.41" fill="none" stroke-linecap="round"/><path d="M27.2 15.9 Q26.3 16.1 25.6 16.4" stroke="#111" stroke-width="0.90" fill="none" stroke-linecap="round"/><path d="M26.3 22.9 Q25.9 22.8 26.3 24.3" stroke="#111" stroke-width="1.19" fill="none" stroke-linecap="round"/><path d="M26.3 23.6 Q29.6 24.5 29.7 23.2" stroke="#111" stroke-width="1.16" fill="none" stroke-linecap="round"/><path d="M30.0 24.9 Q27.7 27.1 29.1 26.5" stroke="#111" stroke-width="1.36" fill="none" stroke-linecap="round"/><path d="M28.5 27.6 Q29.1 27.3 29.5 27.1" stroke="#111" stroke-width="1.32" fill="none" stroke-linecap="round"/><path d="M29.3 28.0 Q29.6 30.0 28.4 30.5" stroke="#111" stroke-width="0.92" fill="none" stroke-linecap="round"/><path d="M26.1 24.8 Q28.0 24.8 27.3 24.3" stroke="#111" stroke-width="1.18" fill="none" stroke-linecap="round"/><path d="M33.9 6.3 Q34.9 6.0 32.8 9.0" stroke="#111" stroke-width="1.12" fill="none" stroke-linecap="round"/><path d="M35.9 6.4 Q35.0 8.6 36.3 8.8" stroke="#111" stroke-width="0.92" fill="none" stroke-linecap="round"/><path d="M35.5 6.3 Q37.6 5.1 36.5 5.6" stroke="#111" stroke-width="0.80" fill="none" stroke-linecap="round"/><path d="M33.1 9.9 Q32.6 11.2 33.7 11.9" stroke="#111" stroke-width="0.78" fill="none" stroke-linecap="round"/><path d="M33.0 10.5 Q35.1 10.5 35.7 12.2" stroke="#111" stroke-width="1.11" fill="none" stroke-linecap="round"/><path d="M36.0 18.7 Q33.9 18.7 35.1 19.0" stroke="#111" stroke-width="0.96" fill="none" stroke-linecap="round"/><path d="M33.1 16.5 Q34.7 19.7 37.2 19.5" stroke="#111" stroke-width="1.38" fill="none" stroke-linecap="round"/><path d="M33.1 14.7 Q34.0 15.1 36.0 14.7" stroke="#111" stroke-width="1.19" fill="none" stroke-linecap="round"/><path d="M35.7 20.3 Q34.3 18.8 36.8 21.2" stroke="#111" stroke-width="1.09" fill="none" stroke-linecap="round"/><path d="M34.7 20.6 Q33.2 22.2 33.1 21.0" stroke="#111" stroke-width="0.77" fill="none" stroke-linecap="round"/><path d="M33.3 28.4 Q33.7 29.2 35.9 31.0" stroke="#111" stroke-width="1.03" fill="none" stroke-linecap="round"/><path d="M36.9 26.9 Q34.6 25.5 34.2 27.6" stroke="#111" stroke-width="0.84" fill="none" stroke-linecap="round"/><path d="M36.2 25.5 Q35.7 25.6 36.9 25.5" stroke="#111" stroke-width="0.90" fill="none" stroke-linecap="round"/><path d="M43.0 7.1 Q43.5 9.3 43.7 9.9" stroke="#111" stroke-width="0.80" fill="none" stroke-linecap="round"/><path d="M42.7 6.3 Q41.9 5.3 42.9 7.9" stroke="#111" stroke-width="1.38" fill="none" stroke-linecap="round"/><path d="M41.4 10.5 Q41.6 11.1 40.5 12.5" stroke="#111" stroke-width="0.93" fill="none" stroke-linecap="round"/><path d="M41.6 12.3 Q39.1 13.0 39.9 13.8" stroke="#111" stroke-width="1.31" fill="none" stroke-linecap="round"/><path d="M41.9 11.3 Q41.1 12.5 40.9 13.3" stroke="#111" stroke-width="0.93" fill="none" stroke-linecap="round"/><path d="M40.0 15.3 Q41.8 17.0 40.6 16.6" stroke="#111" stroke-width="1.04" fill="none" stroke-linecap="round"/><path d="M41.4 16.6 Q39.5 15.9 41.1 17.0" stroke="#111" stroke-width="1.41" fill="none" stroke-linecap="round"/><path d="M40.2 16.5 Q40.1 16.8 42.3 19.0" stroke="#111" stroke-width="0.93" fill="none" stroke-linecap="round"/><path d="M41.3 16.3 Q44.1 15.5 43.9 18.7" stroke="#111" stroke-width="0.79" fill="none" stroke-linecap="round"/><path d="M43.6 21.5 Q43.4 22.9 39.7 24.2" stroke="#111" stroke-width="1.08" fill="none" stroke-linecap="round"/><path d="M41.5 22.8 Q42.8 21.0 40.4 22.4" stroke="#111" stroke-width="1.31" fill="none" stroke-linecap="round"/><path d="M42.5 23.1 Q44.2 20.7 43.6 22.4" stroke="#111" stroke-width="0.85" fill="none" stroke-linecap="round"/><path d="M42.3 25.6 Q41.7 26.4 39.9 25.6" stroke="#111" stroke-width="0.84" fill="none" stroke-linecap="round"/><path d="M39.9 26.6 Q39.9 27.3 42.1 27.2" stroke="#111" stroke-width="0.78" fill="none" stroke-linecap="round"/><path d="M49.2 8.2 Q47.8 10.0 48.5 8.2" stroke="#111" stroke-width="1.24" fill="none" stroke-linecap="round"/><path d="M47.8 4.3 Q47.9 4.2 48.6 6.0" stroke="#111" stroke-width="1.21" fill="none" stroke-linecap="round"/><path d="M50.3 5.3 Q48.0 6.2 46.3 5.6" stroke="#111" stroke-width="0.90" fill="none" stroke-linecap="round"/><path d="M50.0 9.6 Q50.3 8.2 48.6 9.4" stroke="#111" stroke-width="1.08" fill="none" stroke-linecap="round"/><path d="M47.6 13.3 Q47.6 15.6 46.7 14.7" stroke="#111" stroke-width="1.09" fill="none" stroke-linecap="round"/><path d="M50.3 9.5 Q47.9 8.9 49.0 12.2" stroke="#111" stroke-width="1.16" fill="none" stroke-linecap="round"/><path d="M48.2 12.4 Q48.5 12.1 47.1 13.2" stroke="#111" stroke-width="0.84" fill="none" stroke-linecap="round"/><path d="M47.9 15.1 Q47.4 16.7 50.7 17.1" stroke="#111" stroke-width="1.02" fill="none" stroke-linecap="round"/><path d="M48.1 15.7 Q46.6 14.7 47.0 14.8" stroke="#111" stroke-width="1.40" fill="none" stroke-linecap="round"/><path d="M48.1 22.7 Q46.2 24.6 47.7 24.9" stroke="#111" stroke-width="0.90" fill="none" stroke-linecap="round"/><path d="M48.7 21.3 Q48.1 22.8 47.7 23.2" stroke="#111" stroke-width="0.93" fill="none" stroke-linecap="round"/><path d="M46.7 24.4 Q45.6 26.7 46.5 27.1" stroke="#111" stroke-width="1.36" fill="none" stroke-linecap="round"/><path d="M47.9 25.5 Q48.4 27.1 50.8 26.9" stroke="#111" stroke-width="0.98" fill="none" stroke-linecap="round"/><path d="M47.6 24.3 Q49.3 27.4 49.8 26.9" stroke="#111" stroke-width="0.79" fill="none" stroke-linecap="round"/><path d="M57.3 6.0 Q55.7 8.1 54.2 6.7" stroke="#111" stroke-width="0.89" fill="none" stroke-linecap="round"/><path d="M56.7 7.6 Q57.3 7.9 57.0 9.7" stroke="#111" stroke-width="0.98" fill="none" stroke-linecap="round"/><path d="M54.9 7.8 Q55.1 6.7 53.4 7.6" stroke="#111" stroke-width="0.81" fill="none" stroke-linecap="round"/><path d="M55.6 10.0 Q53.6 10.2 55.1 9.4" stroke="#111" stroke-width="0.91" fill="none" stroke-linecap="round"/><path d="M55.1 13.7 Q54.9 13.4 57.7 13.4" stroke="#111" stroke-width="1.36" fill="none" stroke-linecap="round"/><path d="M54.3 11.7 Q56.7 11.9 56.7 13.7" stroke="#111" stroke-width="0.95" fill="none" stroke-linecap="round"/><path d="M54.5 10.4 Q53.1 9.7 54.3 11.2" stroke="#111" stroke-width="0.96" fill="none" stroke-linecap="round"/><path d="M54.7 16.0 Q55.2 17.8 57.8 17.1" stroke="#111" stroke-width="1.20" fill="none" stroke-linecap="round"/><path d="M57.4 14.7 Q57.7 17.5 55.3 17.0" stroke="#111" stroke-width="0.80" fill="none" stroke-linecap="round"/><path d="M53.6 22.0 Q53.6 21.9 57.0 21.7" stroke="#111" stroke-width="0.89" fill="none" stroke-linecap="round"/><path d="M55.9 22.7 Q56.6 23.1 56.2 21.8" stroke="#111" stroke-width="1.00" fill="none" stroke-linecap="round"/><path d="M54.0 25.2 Q54.7 24.7 54.3 26.6" stroke="#111" stroke-width="0.78" fill="none" stroke-linecap="round"/><path d="M54.7 27.3 Q53.1 28.6 53.9 27.6" stroke="#111" stroke-width="1.13" fill="none" stroke-linecap="round"/><path d="M53.6 24.7 Q54.8 23.7 54.9 25.9" stroke="#111" stroke-width="0.88" fill="none" stroke-linecap="round"/><path d="M63.0 6.1 Q63.1 6.8 60.1 8.1" stroke="#111" stroke-width="0.78" fill="none" stroke-linecap="round"/><path d="M63.4 7.9 Q62.8 9.9 63.0 8.4" stroke="#111" stroke-width="1.06" fill="none" stroke-linecap="round"/><path d="M60.9 4.8 Q60.1 6.5 60.3 6.1" stroke="#111" stroke-width="0.86" fill="none" stroke-linecap="round"/><path d="M62.9 13.3 Q61.1 14.1 60.3 14.8" stroke="#111" stroke-width="0.87" fill="none" stroke-linecap="round"/><path d="M61.4 11.6 Q62.8 12.5 64.3 11.0" stroke="#111" stroke-width="1.41" fill="none" stroke-linecap="round"/><path d="M63.7 14.4 Q64.4 15.1 64.3 14.7" stroke="#111" stroke-width="0.83" fill="none" stroke-linecap="round"/><path d="M63.2 17.3 Q65.1 18.6 64.2 18.9" stroke="#111" stroke-width="1.18" fill="none" stroke-linecap="round"/><path d="M61.0 20.2 Q60.9 19.3 61.8 21.3" stroke="#111" stroke-width="0.93" fill="none" stroke-linecap="round"/><path d="M63.2 23.3 Q62.7 22.1 60.1 24.5" stroke="#111" stroke-width="1.32" fill="none" stroke-linecap="round"/><path d="M60.7 21.9 Q60.8 22.4 62.5 23.5" stroke="#111" stroke-width="1.15" fill="none" stroke-linecap="round"/><path d="M61.7 26.5 Q63.2 25.9 60.7 25.5" stroke="#111" stroke-width="1.06" fill="none" stroke-linecap="round"/><path d="M62.8 27.9 Q62.9 27.3 63.9 30.2" stroke="#111" stroke-width="1.01" fill="none" stroke-linecap="round"/><path d="M61.7 27.9 Q60.2 27.2 62.3 29.5" stroke="#111" stroke-width="1.38" fill="none" stroke-linecap="round"/><path d="M61.5 27.5 Q62.5 29.1 60.3 29.5" stroke="#111" stroke-width="1.29" fill="none" stroke-linecap="round"/><path d="M70.4 5.1 Q72.8 7.3 71.5 6.1" stroke="#111" stroke-width="0.88" fill="none" stroke-linecap="round"/><path d="M70.3 8.4 Q69.7 7.3 67.1 8.8" stroke="#111" stroke-width="1.36" fill="none" stroke-linecap="round"/><path d="M68.2 7.9 Q69.5 7.3 67.4 8.9" stroke="#111" stroke-width="0.94" fill="none" stroke-linecap="round"/><path d="M69.2 5.7 Q66.7 7.3 66.9 5.4" stroke="#111" stroke-width="1.22" fill="none" stroke-linecap="round"/><path d="M70.3 10.4 Q71.8 11.9 70.4 9.6" stroke="#111" stroke-width="1.07" fill="none" stroke-linecap="round"/><path d="M69.2 12.3 Q70.3 13.8 71.0 12.4" stroke="#111" stroke-width="1.26" fill="none" stroke-linecap="round"/><path d="M76.3 5.9 Q75.5 7.2 77.3 6.6" stroke="#111" stroke-width="0.80" fill="none" stroke-linecap="round"/><path d="M77.3 5.4 Q77.3 7.5 76.7 8.3" stroke="#111" stroke-width="0.98" fill="none" stroke-linecap="round"/><path d="M74.0 4.4 Q73.9 5.2 74.3 5.9" stroke="#111" stroke-width="1.36" fill="none" stroke-linecap="round"/><path d="M76.5 9.5 Q74.4 10.2 73.9 10.7" stroke="#111" stroke-width="1.12" fill="none" stroke-linecap="round"/><path d="M75.6 10.6 Q76.3 9.5 74.2 11.1" stroke="#111" stroke-width="0.78" fill="none" stroke-linecap="round"/><path d="M74.6 14.7 Q76.7 15.5 76.7 17.2" stroke="#111" stroke-width="0.94" fill="none" stroke-linecap="round"/><path d="M74.0 17.2 Q75.7 17.1 76.3 17.6" stroke="#111" stroke-width="1.39" fill="none" stroke-linecap="round"/><path d="M77.0 15.4 Q77.6 14.6 77.9 14.5" stroke="#111" stroke-width="0.93" fill="none" stroke-linecap="round"/><path d="M74.2 17.8 Q75.7 16.9 73.7 19.0" stroke="#111" stroke-width="0.90" fill="none" stroke-linecap="round"/><path d="M76.6 21.1 Q74.8 22.1 76.5 22.2" stroke="#111" stroke-width="1.43" fill="none" stroke-linecap="round"/><path d="M76.9 21.4 Q76.3 23.3 76.2 21.9" stroke="#111" stroke-width="0.82" fill="none" stroke-linecap="round"/><path d="M76.6 20.0 Q78.1 18.6 78.4 20.1" stroke="#111" stroke-width="1.36" fill="none" stroke-linecap="round"/><path d="M77.7 23.5 Q76.9 23.8 74.9 22.7" stroke="#111" stroke-width="1.22" fill="none" stroke-linecap="round"/><path d="M75.2 28.4 Q76.6 26.8 77.9 27.8" stroke="#111" stroke-width="1.37" fill="none" stroke-linecap="round"/><path d="M77.4 25.2 Q74.7 26.0 74.4 27.8" stroke="#111" stroke-width="1.17" fill="none" stroke-linecap="round"/><path d="M75.5 28.1 Q78.1 29.7 78.0 31.0" stroke="#111" stroke-width="1.08" fill="none" stroke-linecap="round"/><path d="M82.6 7.5 Q81.7 8.1 83.2 7.7" stroke="#111" stroke-width="0.82" fill="none" stroke-linecap="round"/><path d="M84.5 4.9 Q84.3 4.0 80.6 4.3" stroke="#111" stroke-width="0.86" fill="none" stroke-linecap="round"/><path d="M81.4 12.1 Q79.2 13.2 80.7 11.4" stroke="#111" stroke-width="1.27" fill="none" stroke-linecap="round"/><path d="M81.6 13.5 Q83.8 15.4 83.0 15.2" stroke="#111" stroke-width="1.24" fill="none" stroke-linecap="round"/><path d="M81.6 14.8 Q82.4 16.5 80.6 17.1" stroke="#111" stroke-width="1.31" fill="none" stroke-linecap="round"/><path d="M83.4 15.5 Q83.2 14.1 80.9 14.9" stroke="#111" stroke-width="0.98" fill="none" stroke-linecap="round"/><path d="M82.2 23.4 Q83.1 25.5 80.7 25.5" stroke="#111" stroke-width="1.17" fill="none" stroke-linecap="round"/><path d="M82.8 20.5 Q81.5 21.7 84.0 22.7" stroke="#111" stroke-width="0.83" fill="none" stroke-linecap="round"/><path d="M83.0 25.2 Q85.1 23.6 84.6 24.6" stroke="#111" stroke-width="0.77" fill="none" stroke-linecap="round"/><path d="M81.6 27.7 Q83.4 27.2 85.2 26.7" stroke="#111" stroke-width="1.30" fill="none" stroke-linecap="round"/><path d="M91.6 6.6 Q92.1 8.1 90.1 6.2" stroke="#111" stroke-width="0.92" fill="none" stroke-linecap="round"/><path d="M88.3 8.5 Q91.6 9.2 91.0 9.4" stroke="#111" stroke-width="0.84" fill="none" stroke-linecap="round"/><path d="M89.0 4.7 Q91.4 5.7 91.8 7.2" stroke="#111" stroke-width="1.20" fill="none" stroke-linecap="round"/><path d="M88.7 13.3 Q90.8 12.5 89.7 13.8" stroke="#111" stroke-width="1.07" fill="none" stroke-linecap="round"/><path d="M89.8 12.6 Q89.8 12.7 90.9 14.2" stroke="#111" stroke-width="0.87" fill="none" stroke-linecap="round"/><path d="M91.1 12.2 Q90.8 13.2 90.9 11.9" stroke="#111" stroke-width="1.15" fill="none" stroke-linecap="round"/><path d="M90.3 17.4 Q91.0 18.7 89.8 17.5" stroke="#111" stroke-width="1.18" fill="none" stroke-linecap="round"/><path d="M90.6 18.6 Q90.1 18.3 90.8 20.0" stroke="#111" stroke-width="1.40" fill="none" stroke-linecap="round"/><path d="M88.7 18.5 Q91.0 17.2 92.1 18.2" stroke="#111" stroke-width="0.87" fill="none" stroke-linecap="round"/><path d="M90.7 21.2 Q87.9 20.8 88.3 22.8" stroke="#111" stroke-width="1.03" fill="none" stroke-linecap="round"/><path d="M87.8 21.0 Q89.5 22.5 91.1 22.8" stroke="#111" stroke-width="1.08" fill="none" stroke-linecap="round"/><path d="M88.2 22.0 Q90.4 22.7 89.3 23.9" stroke="#111" stroke-width="1.15" fill="none" stroke-linecap="round"/><path d="M91.1 27.3 Q91.4 28.8 90.4 29.8" stroke="#111" stroke-width="0.92" fill="none" stroke-linecap="round"/><path d="M88.4 24.8 Q89.7 26.4 89.4 24.8" stroke="#111" stroke-width="0.93" fill="none" stroke-linecap="round"/><path d="M89.3 27.5 Q88.6 26.7 88.1 29.9" stroke="#111" stroke-width="1.34" fill="none" stroke-linecap="round"/><path d="M98.2 5.7 Q97.8 5.3 94.2 8.1" stroke="#111" stroke-width="0.94" fill="none" stroke-linecap="round"/><path d="M95.4 7.5 Q96.5 8.8 98.7 7.3" stroke="#111" stroke-width="1.07" fill="none" stroke-linecap="round"/><path d="M96.6 12.1 Q97.0 14.5 98.2 13.2" stroke="#111" stroke-width="0.91" fill="none" stroke-linecap="round"/><path d="M97.3 11.0 Q99.5 10.2 97.8 10.5" stroke="#111" stroke-width="0.81" fill="none" stroke-linecap="round"/><path d="M95.6 11.0 Q94.6 12.2 94.2 11.7" stroke="#111" stroke-width="1.00" fill="none" stroke-linecap="round"/><path d="M95.8 16.1 Q99.2 19.3 98.7 18.9" stroke="#111" stroke-width="1.07" fill="none" stroke-linecap="round"/><path d="M95.2 18.4 Q93.6 20.1 94.5 20.6" stroke="#111" stroke-width="1.25" fill="none" stroke-linecap="round"/><path d="M96.0 22.1 Q96.9 22.4 98.1 24.4" stroke="#111" stroke-width="1.13" fill="none" stroke-linecap="round"/><path d="M95.0 23.0 Q94.5 23.7 95.9 25.4" stroke="#111" stroke-width="0.94" fill="none" stroke-linecap="round"/><path d="M96.5 27.9 Q97.9 27.4 98.0 28.3" stroke="#111" stroke-width="1.09" fill="none" stroke-linecap="round"/><path d="M97.1 24.6 Q97.0 24.0 98.5 24.2" stroke="#111" stroke-width="0.83" fill="none" stroke-linecap="round"/></svg></div><div class="abs" style="left:21px;top:55px;width:104px;height:41px;background:#D8D6D0;overflow:hidden"><svg style="left:0;top:0;opacity:0.85;filter:blur(0.3px)" width="104" height="41"><path d="M6.1 7.3 Q6.8 7.1 6.7 8.1" stroke="#111" stroke-width="1.39" fill="none" stroke-linecap="round"/><path d="M8.3 7.5 Q8.9 8.6 5.8 10.3" stroke="#111" stroke-width="0.88" fill="none" stroke-linecap="round"/><path d="M7.5 13.4 Q7.2 15.4 7.9 15.5" stroke="#111" stroke-width="0.84" fill="none" stroke-linecap="round"/><path d="M6.6 12.3 Q5.9 11.7 8.5 13.0" stroke="#111" stroke-width="0.91" fill="none" stroke-linecap="round"/><path d="M6.2 18.2 Q7.2 17.8 9.2 17.5" stroke="#111" stroke-width="0.79" fill="none" stroke-linecap="round"/><path d="M7.1 18.3 Q4.8 19.3 5.6 19.7" stroke="#111" stroke-width="1.36" fill="none" stroke-linecap="round"/><path d="M9.0 19.8 Q9.5 20.5 9.4 20.9" stroke="#111" stroke-width="0.90" fill="none" stroke-linecap="round"/><path d="M5.7 20.1 Q5.8 22.8 8.7 21.9" stroke="#111" stroke-width="1.24" fill="none" stroke-linecap="round"/><path d="M7.7 27.0 Q8.7 29.0 5.7 27.1" stroke="#111" stroke-width="0.85" fill="none" stroke-linecap="round"/><path d="M8.3 28.5 Q5.4 28.7 6.2 30.0" stroke="#111" stroke-width="1.21" fill="none" stroke-linecap="round"/><path d="M7.8 27.7 Q8.1 28.3 5.4 28.1" stroke="#111" stroke-width="1.07" fill="none" stroke-linecap="round"/><path d="M8.4 31.0 Q6.6 29.3 7.9 30.0" stroke="#111" stroke-width="0.95" fill="none" stroke-linecap="round"/><path d="M8.7 30.6 Q5.8 30.7 6.4 31.7" stroke="#111" stroke-width="1.14" fill="none" stroke-linecap="round"/><path d="M7.1 30.8 Q6.2 32.0 8.8 32.1" stroke="#111" stroke-width="0.83" fill="none" stroke-linecap="round"/><path d="M8.5 31.5 Q7.6 31.3 9.6 32.8" stroke="#111" stroke-width="1.23" fill="none" stroke-linecap="round"/><path d="M13.3 5.0 Q11.1 4.6 12.5 4.6" stroke="#111" stroke-width="1.29" fill="none" stroke-linecap="round"/><path d="M13.4 4.3 Q14.5 3.5 15.7 4.5" stroke="#111" stroke-width="1.40" fill="none" stroke-linecap="round"/><path d="M15.1 9.5 Q15.6 10.0 14.1 11.4" stroke="#111" stroke-width="1.36" fill="none" stroke-linecap="round"/><path d="M12.9 12.5 Q14.2 12.1 15.6 15.0" stroke="#111" stroke-width="0.80" fill="none" stroke-linecap="round"/><path d="M14.4 10.0 Q15.8 8.6 14.9 9.4" stroke="#111" stroke-width="0.78" fill="none" stroke-linecap="round"/><path d="M14.7 16.7 Q13.8 16.4 12.3 17.9" stroke="#111" stroke-width="0.81" fill="none" stroke-linecap="round"/><path d="M14.9 16.9 Q14.0 17.3 14.7 17.6" stroke="#111" stroke-width="1.19" fill="none" stroke-linecap="round"/><path d="M15.5 18.2 Q13.3 18.5 14.6 21.0" stroke="#111" stroke-width="0.86" fill="none" stroke-linecap="round"/><path d="M14.1 21.5 Q14.9 20.6 14.9 20.7" stroke="#111" stroke-width="1.35" fill="none" stroke-linecap="round"/><path d="M13.2 23.0 Q15.8 21.8 15.4 24.5" stroke="#111" stroke-width="1.16" fill="none" stroke-linecap="round"/><path d="M14.8 22.3 Q13.1 22.4 13.8 21.6" stroke="#111" stroke-width="0.89" fill="none" stroke-linecap="round"/><path d="M14.8 26.7 Q12.8 26.0 14.2 28.5" stroke="#111" stroke-width="0.98" fill="none" stroke-linecap="round"/><path d="M14.1 26.3 Q13.3 25.1 12.6 26.8" stroke="#111" stroke-width="1.36" fill="none" stroke-linecap="round"/><path d="M15.0 26.3 Q12.2 25.9 12.5 29.2" stroke="#111" stroke-width="0.82" fill="none" stroke-linecap="round"/><path d="M13.8 32.6 Q13.4 33.7 14.1 33.7" stroke="#111" stroke-width="0.93" fill="none" stroke-linecap="round"/><path d="M13.3 31.6 Q14.8 30.0 12.8 32.3" stroke="#111" stroke-width="0.84" fill="none" stroke-linecap="round"/><path d="M21.0 5.7 Q22.7 5.0 22.9 7.2" stroke="#111" stroke-width="0.80" fill="none" stroke-linecap="round"/><path d="M19.9 5.8 Q19.7 8.1 23.5 6.5" stroke="#111" stroke-width="0.97" fill="none" stroke-linecap="round"/><path d="M22.6 4.4 Q21.0 5.0 20.9 5.0" stroke="#111" stroke-width="1.35" fill="none" stroke-linecap="round"/><path d="M19.9 10.5 Q20.7 11.0 21.0 11.9" stroke="#111" stroke-width="0.89" fill="none" stroke-linecap="round"/><path d="M20.7 10.7 Q18.9 12.1 19.6 11.9" stroke="#111" stroke-width="1.20" fill="none" stroke-linecap="round"/><path d="M19.7 12.1 Q20.4 13.5 20.4 12.9" stroke="#111" stroke-width="1.35" fill="none" stroke-linecap="round"/><path d="M22.0 17.7 Q20.2 17.5 19.1 19.4" stroke="#111" stroke-width="1.25" fill="none" stroke-linecap="round"/><path d="M22.2 17.8 Q19.7 19.9 21.2 18.7" stroke="#111" stroke-width="0.91" fill="none" stroke-linecap="round"/><path d="M19.3 19.9 Q20.7 21.6 19.5 19.3" stroke="#111" stroke-width="1.20" fill="none" stroke-linecap="round"/><path d="M20.7 23.2 Q21.7 22.5 21.2 22.8" stroke="#111" stroke-width="0.95" fill="none" stroke-linecap="round"/><path d="M20.4 21.0 Q21.5 22.0 19.6 22.4" stroke="#111" stroke-width="0.78" fill="none" stroke-linecap="round"/><path d="M20.2 26.6 Q23.2 25.3 22.4 27.3" stroke="#111" stroke-width="0.96" fill="none" stroke-linecap="round"/><path d="M21.2 26.4 Q20.9 27.0 23.5 26.1" stroke="#111" stroke-width="1.26" fill="none" stroke-linecap="round"/><path d="M22.9 29.4 Q21.9 28.8 19.6 31.5" stroke="#111" stroke-width="0.86" fill="none" stroke-linecap="round"/><path d="M20.0 31.7 Q20.3 32.4 23.1 31.6" stroke="#111" stroke-width="1.05" fill="none" stroke-linecap="round"/><path d="M22.6 33.7 Q22.9 32.9 23.2 35.6" stroke="#111" stroke-width="1.30" fill="none" stroke-linecap="round"/><path d="M28.9 5.1 Q27.9 6.5 26.1 4.8" stroke="#111" stroke-width="0.94" fill="none" stroke-linecap="round"/><path d="M27.0 6.4 Q25.6 8.0 28.1 8.4" stroke="#111" stroke-width="0.99" fill="none" stroke-linecap="round"/><path d="M26.9 8.7 Q26.6 11.6 25.7 10.6" stroke="#111" stroke-width="1.20" fill="none" stroke-linecap="round"/><path d="M27.3 7.4 Q25.6 9.0 27.2 8.0" stroke="#111" stroke-width="0.93" fill="none" stroke-linecap="round"/><path d="M26.1 10.0 Q25.0 11.3 26.3 11.3" stroke="#111" stroke-width="1.12" fill="none" stroke-linecap="round"/><path d="M28.3 13.1 Q27.5 13.9 29.4 15.7" stroke="#111" stroke-width="1.40" fill="none" stroke-linecap="round"/><path d="M27.6 10.5 Q29.1 10.9 27.9 10.3" stroke="#111" stroke-width="0.83" fill="none" stroke-linecap="round"/><path d="M29.9 11.6 Q30.2 11.7 26.8 13.0" stroke="#111" stroke-width="0.78" fill="none" stroke-linecap="round"/><path d="M28.6 16.3 Q30.8 14.8 30.1 15.7" stroke="#111" stroke-width="1.25" fill="none" stroke-linecap="round"/><path d="M27.0 15.6 Q26.0 15.5 25.7 17.3" stroke="#111" stroke-width="1.39" fill="none" stroke-linecap="round"/><path d="M29.7 21.7 Q26.6 20.9 25.7 23.7" stroke="#111" stroke-width="0.78" fill="none" stroke-linecap="round"/><path d="M29.4 22.4 Q29.2 21.4 27.3 23.7" stroke="#111" stroke-width="1.24" fill="none" stroke-linecap="round"/><path d="M28.9 23.5 Q27.4 25.5 25.9 24.8" stroke="#111" stroke-width="1.01" fill="none" stroke-linecap="round"/><path d="M28.7 23.3 Q29.5 22.0 27.3 24.3" stroke="#111" stroke-width="1.41" fill="none" stroke-linecap="round"/><path d="M27.1 26.2 Q29.8 24.8 30.3 26.9" stroke="#111" stroke-width="1.01" fill="none" stroke-linecap="round"/><path d="M28.9 27.2 Q27.8 29.4 27.6 27.7" stroke="#111" stroke-width="1.30" fill="none" stroke-linecap="round"/><path d="M28.0 27.5 Q27.8 26.6 25.9 27.0" stroke="#111" stroke-width="1.10" fill="none" stroke-linecap="round"/><path d="M27.5 33.5 Q30.8 33.6 30.3 36.3" stroke="#111" stroke-width="0.79" fill="none" stroke-linecap="round"/><path d="M27.1 29.3 Q25.5 30.4 26.2 30.6" stroke="#111" stroke-width="1.02" fill="none" stroke-linecap="round"/><path d="M36.8 4.6 Q37.3 4.4 35.0 4.8" stroke="#111" stroke-width="0.89" fill="none" stroke-linecap="round"/><path d="M34.1 5.5 Q35.0 8.5 36.0 7.8" stroke="#111" stroke-width="1.42" fill="none" stroke-linecap="round"/><path d="M33.0 11.6 Q32.8 13.8 35.9 13.9" stroke="#111" stroke-width="1.33" fill="none" stroke-linecap="round"/><path d="M34.2 12.8 Q34.2 16.2 33.2 15.6" stroke="#111" stroke-width="1.09" fill="none" stroke-linecap="round"/><path d="M34.5 11.5 Q34.6 11.8 33.0 12.5" stroke="#111" stroke-width="1.16" fill="none" stroke-linecap="round"/><path d="M35.7 17.7 Q36.0 17.2 33.3 16.7" stroke="#111" stroke-width="1.06" fill="none" stroke-linecap="round"/><path d="M34.9 17.7 Q33.2 20.7 34.2 19.8" stroke="#111" stroke-width="1.23" fill="none" stroke-linecap="round"/><path d="M34.1 16.4 Q36.2 18.2 36.7 16.7" stroke="#111" stroke-width="1.40" fill="none" stroke-linecap="round"/><path d="M33.9 17.8 Q32.9 18.6 35.4 20.1" stroke="#111" stroke-width="1.07" fill="none" stroke-linecap="round"/><path d="M34.9 23.7 Q32.5 22.8 33.2 25.4" stroke="#111" stroke-width="0.83" fill="none" stroke-linecap="round"/><path d="M35.5 23.5 Q35.1 24.6 32.5 26.1" stroke="#111" stroke-width="0.88" fill="none" stroke-linecap="round"/><path d="M36.2 20.4 Q38.1 18.8 37.2 19.9" stroke="#111" stroke-width="1.19" fill="none" stroke-linecap="round"/><path d="M35.7 28.6 Q36.0 28.7 36.0 29.6" stroke="#111" stroke-width="1.24" fill="none" stroke-linecap="round"/><path d="M33.9 25.4 Q36.8 26.3 35.8 25.4" stroke="#111" stroke-width="0.89" fill="none" stroke-linecap="round"/><path d="M34.4 31.3 Q34.2 30.6 33.0 30.7" stroke="#111" stroke-width="1.37" fill="none" stroke-linecap="round"/><path d="M34.2 30.2 Q35.4 30.7 36.3 30.2" stroke="#111" stroke-width="0.84" fill="none" stroke-linecap="round"/><path d="M32.8 31.8 Q35.6 32.8 37.0 33.4" stroke="#111" stroke-width="1.20" fill="none" stroke-linecap="round"/><path d="M32.8 31.3 Q33.8 30.6 35.7 31.6" stroke="#111" stroke-width="0.91" fill="none" stroke-linecap="round"/><path d="M39.8 6.8 Q42.2 6.8 43.2 5.9" stroke="#111" stroke-width="1.18" fill="none" stroke-linecap="round"/><path d="M41.3 6.1 Q42.7 4.5 42.8 6.3" stroke="#111" stroke-width="0.87" fill="none" stroke-linecap="round"/><path d="M40.3 11.4 Q42.0 11.9 40.6 11.9" stroke="#111" stroke-width="1.20" fill="none" stroke-linecap="round"/><path d="M42.3 9.3 Q43.7 10.6 43.1 11.8" stroke="#111" stroke-width="1.33" fill="none" stroke-linecap="round"/><path d="M43.5 10.5 Q39.9 9.6 40.1 10.8" stroke="#111" stroke-width="0.82" fill="none" stroke-linecap="round"/><path d="M39.7 11.0 Q40.9 12.4 39.3 12.0" stroke="#111" stroke-width="0.80" fill="none" stroke-linecap="round"/><path d="M40.9 18.1 Q41.0 19.0 40.8 17.4" stroke="#111" stroke-width="1.21" fill="none" stroke-linecap="round"/><path d="M41.8 14.7 Q40.6 15.5 39.7 14.9" stroke="#111" stroke-width="1.24" fill="none" stroke-linecap="round"/><path d="M41.1 22.8 Q42.5 21.4 42.0 22.9" stroke="#111" stroke-width="0.80" fill="none" stroke-linecap="round"/><path d="M42.5 23.1 Q44.5 25.7 43.0 24.9" stroke="#111" stroke-width="1.14" fill="none" stroke-linecap="round"/><path d="M40.4 21.9 Q40.3 21.1 41.4 23.7" stroke="#111" stroke-width="0.90" fill="none" stroke-linecap="round"/><path d="M40.2 22.5 Q40.7 24.0 42.6 23.7" stroke="#111" stroke-width="1.07" fill="none" stroke-linecap="round"/><path d="M41.6 25.5 Q39.2 24.8 39.6 26.8" stroke="#111" stroke-width="0.84" fill="none" stroke-linecap="round"/><path d="M41.2 25.1 Q39.5 23.0 41.5 24.5" stroke="#111" stroke-width="1.01" fill="none" stroke-linecap="round"/><path d="M43.1 29.8 Q43.6 32.0 40.6 30.4" stroke="#111" stroke-width="0.91" fill="none" stroke-linecap="round"/><path d="M42.3 33.0 Q40.6 31.4 41.8 33.2" stroke="#111" stroke-width="0.80" fill="none" stroke-linecap="round"/><path d="M39.9 32.5 Q42.7 34.1 42.2 31.8" stroke="#111" stroke-width="1.04" fill="none" stroke-linecap="round"/><path d="M41.1 33.2 Q40.6 35.1 42.5 35.2" stroke="#111" stroke-width="1.06" fill="none" stroke-linecap="round"/><path d="M46.6 8.7 Q48.4 7.6 50.6 7.9" stroke="#111" stroke-width="1.20" fill="none" stroke-linecap="round"/><path d="M47.0 7.0 Q47.8 7.9 50.6 7.1" stroke="#111" stroke-width="1.34" fill="none" stroke-linecap="round"/><path d="M49.6 11.2 Q49.7 12.3 47.9 12.4" stroke="#111" stroke-width="1.40" fill="none" stroke-linecap="round"/><path d="M49.5 10.8 Q48.9 8.8 50.7 9.8" stroke="#111" stroke-width="1.02" fill="none" stroke-linecap="round"/><path d="M49.0 14.5 Q50.4 14.1 48.2 16.2" stroke="#111" stroke-width="1.36" fill="none" stroke-linecap="round"/><path d="M50.2 15.4 Q51.2 17.4 48.9 15.8" stroke="#111" stroke-width="0.81" fill="none" stroke-linecap="round"/><path d="M49.0 15.6 Q47.8 16.2 48.9 15.4" stroke="#111" stroke-width="1.05" fill="none" stroke-linecap="round"/><path d="M53.7 4.5 Q56.0 6.8 55.2 6.9" stroke="#111" stroke-width="0.92" fill="none" stroke-linecap="round"/><path d="M53.9 5.8 Q55.6 6.2 54.2 7.8" stroke="#111" stroke-width="0.81" fill="none" stroke-linecap="round"/><path d="M53.9 9.3 Q55.5 11.8 57.1 12.2" stroke="#111" stroke-width="1.21" fill="none" stroke-linecap="round"/><path d="M56.1 11.0 Q55.2 9.3 57.6 11.2" stroke="#111" stroke-width="1.29" fill="none" stroke-linecap="round"/><path d="M56.6 13.1 Q56.2 12.2 56.9 13.0" stroke="#111" stroke-width="1.34" fill="none" stroke-linecap="round"/><path d="M53.4 10.6 Q52.8 9.8 56.2 12.2" stroke="#111" stroke-width="0.88" fill="none" stroke-linecap="round"/><path d="M56.4 17.7 Q57.7 18.5 57.8 19.7" stroke="#111" stroke-width="1.41" fill="none" stroke-linecap="round"/><path d="M56.9 16.0 Q54.6 15.2 53.7 18.3" stroke="#111" stroke-width="0.82" fill="none" stroke-linecap="round"/><path d="M55.8 17.1 Q54.6 17.6 57.0 16.1" stroke="#111" stroke-width="0.99" fill="none" stroke-linecap="round"/><path d="M54.7 14.8 Q57.9 15.8 57.5 16.4" stroke="#111" stroke-width="1.03" fill="none" stroke-linecap="round"/><path d="M55.8 22.6 Q56.9 21.2 56.3 23.7" stroke="#111" stroke-width="0.81" fill="none" stroke-linecap="round"/><path d="M54.3 21.3 Q54.3 20.9 56.7 20.4" stroke="#111" stroke-width="0.98" fill="none" stroke-linecap="round"/><path d="M53.7 20.5 Q54.8 19.3 53.2 19.6" stroke="#111" stroke-width="1.24" fill="none" stroke-linecap="round"/><path d="M54.4 22.6 Q56.2 23.7 57.3 21.6" stroke="#111" stroke-width="1.28" fill="none" stroke-linecap="round"/><path d="M57.2 26.9 Q56.5 28.8 53.3 26.9" stroke="#111" stroke-width="0.80" fill="none" stroke-linecap="round"/><path d="M54.7 25.1 Q55.0 25.8 57.6 27.8" stroke="#111" stroke-width="0.97" fill="none" stroke-linecap="round"/><path d="M56.3 26.1 Q57.2 25.7 56.6 26.6" stroke="#111" stroke-width="0.84" fill="none" stroke-linecap="round"/><path d="M56.2 28.1 Q53.9 27.5 54.5 29.8" stroke="#111" stroke-width="1.07" fill="none" stroke-linecap="round"/><path d="M54.0 32.5 Q56.0 30.4 54.3 31.6" stroke="#111" stroke-width="1.30" fill="none" stroke-linecap="round"/><path d="M56.5 31.2 Q55.1 32.7 56.0 31.1" stroke="#111" stroke-width="1.26" fill="none" stroke-linecap="round"/><path d="M60.3 6.8 Q61.5 5.8 61.3 8.1" stroke="#111" stroke-width="1.41" fill="none" stroke-linecap="round"/><path d="M60.4 6.5 Q61.8 6.4 62.9 7.5" stroke="#111" stroke-width="1.37" fill="none" stroke-linecap="round"/><path d="M64.2 12.1 Q64.9 13.8 63.6 13.3" stroke="#111" stroke-width="1.10" fill="none" stroke-linecap="round"/><path d="M62.1 10.1 Q62.2 9.4 63.0 12.1" stroke="#111" stroke-width="1.24" fill="none" stroke-linecap="round"/><path d="M62.9 12.2 Q62.7 14.6 60.6 14.7" stroke="#111" stroke-width="0.87" fill="none" stroke-linecap="round"/><path d="M61.3 11.6 Q59.3 11.7 59.9 14.5" stroke="#111" stroke-width="1.29" fill="none" stroke-linecap="round"/><path d="M63.6 16.8 Q63.0 17.8 62.5 15.8" stroke="#111" stroke-width="1.24" fill="none" stroke-linecap="round"/><path d="M61.0 16.8 Q61.2 16.7 60.1 18.6" stroke="#111" stroke-width="0.87" fill="none" stroke-linecap="round"/><path d="M62.8 14.7 Q60.8 15.7 60.2 15.3" stroke="#111" stroke-width="1.01" fill="none" stroke-linecap="round"/><path d="M63.4 17.4 Q65.2 16.1 63.7 17.2" stroke="#111" stroke-width="0.98" fill="none" stroke-linecap="round"/><path d="M63.6 20.8 Q65.2 21.5 63.8 21.8" stroke="#111" stroke-width="1.00" fill="none" stroke-linecap="round"/><path d="M64.3 23.7 Q63.8 24.9 62.5 24.8" stroke="#111" stroke-width="0.95" fill="none" stroke-linecap="round"/><path d="M64.1 21.1 Q66.0 23.5 64.7 22.4" stroke="#111" stroke-width="0.95" fill="none" stroke-linecap="round"/><path d="M60.9 26.8 Q62.8 25.0 64.1 25.9" stroke="#111" stroke-width="1.20" fill="none" stroke-linecap="round"/><path d="M60.3 25.2 Q62.1 26.3 60.1 25.2" stroke="#111" stroke-width="1.07" fill="none" stroke-linecap="round"/><path d="M64.2 24.8 Q63.1 26.8 61.1 26.5" stroke="#111" stroke-width="1.17" fill="none" stroke-linecap="round"/><path d="M63.0 25.8 Q61.2 26.9 62.1 25.7" stroke="#111" stroke-width="0.99" fill="none" stroke-linecap="round"/><path d="M62.3 31.1 Q62.1 31.9 62.3 31.7" stroke="#111" stroke-width="1.17" fill="none" stroke-linecap="round"/><path d="M62.5 30.6 Q60.7 31.0 62.3 30.3" stroke="#111" stroke-width="1.35" fill="none" stroke-linecap="round"/><path d="M62.0 32.3 Q62.8 35.0 63.3 34.7" stroke="#111" stroke-width="1.01" fill="none" stroke-linecap="round"/><path d="M64.2 30.1 Q64.0 28.5 61.8 30.0" stroke="#111" stroke-width="1.37" fill="none" stroke-linecap="round"/><path d="M68.9 7.2 Q69.9 9.3 69.3 8.1" stroke="#111" stroke-width="1.19" fill="none" stroke-linecap="round"/><path d="M70.3 5.8 Q69.3 3.6 68.1 4.9" stroke="#111" stroke-width="0.95" fill="none" stroke-linecap="round"/><path d="M68.1 10.2 Q67.8 11.8 67.3 13.2" stroke="#111" stroke-width="0.90" fill="none" stroke-linecap="round"/><path d="M68.1 11.2 Q65.7 11.3 66.9 11.5" stroke="#111" stroke-width="1.22" fill="none" stroke-linecap="round"/><path d="M68.5 9.5 Q71.2 8.8 71.2 11.9" stroke="#111" stroke-width="1.34" fill="none" stroke-linecap="round"/><path d="M68.4 16.8 Q67.3 17.3 66.9 16.8" stroke="#111" stroke-width="1.35" fill="none" stroke-linecap="round"/><path d="M70.7 16.5 Q70.8 18.9 68.0 18.8" stroke="#111" stroke-width="1.21" fill="none" stroke-linecap="round"/><path d="M69.8 20.3 Q70.9 20.5 70.3 21.3" stroke="#111" stroke-width="1.31" fill="none" stroke-linecap="round"/><path d="M69.8 22.3 Q70.5 23.1 71.1 24.7" stroke="#111" stroke-width="1.16" fill="none" stroke-linecap="round"/><path d="M67.7 22.5 Q68.3 22.7 67.2 23.1" stroke="#111" stroke-width="1.16" fill="none" stroke-linecap="round"/><path d="M67.3 25.0 Q68.6 23.6 68.1 26.0" stroke="#111" stroke-width="0.79" fill="none" stroke-linecap="round"/><path d="M68.8 25.3 Q71.1 28.4 70.2 27.5" stroke="#111" stroke-width="1.40" fill="none" stroke-linecap="round"/><path d="M68.1 26.8 Q68.5 27.9 67.4 28.0" stroke="#111" stroke-width="1.42" fill="none" stroke-linecap="round"/><path d="M68.6 26.2 Q68.6 26.8 71.1 28.4" stroke="#111" stroke-width="1.28" fill="none" stroke-linecap="round"/><path d="M69.8 29.8 Q71.1 28.6 69.4 29.4" stroke="#111" stroke-width="0.80" fill="none" stroke-linecap="round"/><path d="M68.9 30.3 Q68.4 29.7 70.9 30.0" stroke="#111" stroke-width="1.06" fill="none" stroke-linecap="round"/><path d="M74.1 4.8 Q76.8 4.3 77.7 5.2" stroke="#111" stroke-width="0.90" fill="none" stroke-linecap="round"/><path d="M76.8 7.0 Q75.3 5.7 75.9 7.8" stroke="#111" stroke-width="1.32" fill="none" stroke-linecap="round"/><path d="M76.1 7.7 Q78.1 6.1 77.0 7.4" stroke="#111" stroke-width="1.28" fill="none" stroke-linecap="round"/><path d="M74.3 12.7 Q76.9 13.6 78.2 15.0" stroke="#111" stroke-width="0.95" fill="none" stroke-linecap="round"/><path d="M75.9 11.1 Q76.4 11.6 77.6 13.9" stroke="#111" stroke-width="1.25" fill="none" stroke-linecap="round"/><path d="M77.7 13.6 Q79.3 14.6 78.3 15.8" stroke="#111" stroke-width="1.23" fill="none" stroke-linecap="round"/><path d="M74.8 13.7 Q75.9 16.3 74.7 15.8" stroke="#111" stroke-width="1.01" fill="none" stroke-linecap="round"/><path d="M77.4 15.0 Q79.3 14.1 78.3 15.9" stroke="#111" stroke-width="1.27" fill="none" stroke-linecap="round"/><path d="M77.4 18.3 Q75.3 19.3 74.0 21.3" stroke="#111" stroke-width="1.00" fill="none" stroke-linecap="round"/><path d="M77.9 22.3 Q76.2 24.1 75.5 24.4" stroke="#111" stroke-width="0.78" fill="none" stroke-linecap="round"/><path d="M75.8 20.5 Q76.8 19.8 74.3 22.1" stroke="#111" stroke-width="1.28" fill="none" stroke-linecap="round"/><path d="M74.3 22.1 Q73.2 23.2 74.5 22.4" stroke="#111" stroke-width="0.84" fill="none" stroke-linecap="round"/><path d="M77.0 19.8 Q74.6 20.1 75.4 21.9" stroke="#111" stroke-width="1.39" fill="none" stroke-linecap="round"/><path d="M76.1 28.7 Q76.5 29.9 74.7 28.8" stroke="#111" stroke-width="0.98" fill="none" stroke-linecap="round"/><path d="M74.2 26.5 Q75.5 27.9 76.3 28.9" stroke="#111" stroke-width="1.29" fill="none" stroke-linecap="round"/><path d="M75.6 29.9 Q77.0 30.4 77.5 30.3" stroke="#111" stroke-width="1.15" fill="none" stroke-linecap="round"/><path d="M77.7 30.1 Q79.0 30.3 77.7 30.2" stroke="#111" stroke-width="1.21" fill="none" stroke-linecap="round"/><path d="M76.4 32.5 Q77.6 30.4 76.7 32.1" stroke="#111" stroke-width="1.29" fill="none" stroke-linecap="round"/><path d="M74.3 29.4 Q73.9 28.4 76.7 29.3" stroke="#111" stroke-width="1.03" fill="none" stroke-linecap="round"/><path d="M82.3 5.9 Q82.3 7.6 81.0 7.3" stroke="#111" stroke-width="1.34" fill="none" stroke-linecap="round"/><path d="M84.4 5.9 Q83.7 6.2 81.6 5.3" stroke="#111" stroke-width="0.84" fill="none" stroke-linecap="round"/><path d="M84.5 13.5 Q85.6 14.6 85.0 15.9" stroke="#111" stroke-width="1.27" fill="none" stroke-linecap="round"/><path d="M83.8 10.9 Q84.2 11.6 83.8 12.9" stroke="#111" stroke-width="0.86" fill="none" stroke-linecap="round"/><path d="M84.6 14.3 Q82.4 14.8 82.8 14.8" stroke="#111" stroke-width="0.98" fill="none" stroke-linecap="round"/><path d="M81.9 18.0 Q80.9 20.5 83.8 20.5" stroke="#111" stroke-width="1.08" fill="none" stroke-linecap="round"/><path d="M83.0 23.3 Q85.1 22.2 84.3 22.6" stroke="#111" stroke-width="1.13" fill="none" stroke-linecap="round"/><path d="M82.9 22.1 Q82.5 21.8 80.8 23.2" stroke="#111" stroke-width="1.29" fill="none" stroke-linecap="round"/><path d="M91.6 6.2 Q89.8 8.1 88.2 7.8" stroke="#111" stroke-width="1.12" fill="none" stroke-linecap="round"/><path d="M88.7 6.5 Q92.3 8.8 91.9 8.4" stroke="#111" stroke-width="1.40" fill="none" stroke-linecap="round"/><path d="M89.5 10.5 Q88.3 13.2 88.9 12.2" stroke="#111" stroke-width="1.29" fill="none" stroke-linecap="round"/><path d="M91.3 12.3 Q89.6 10.7 90.8 12.3" stroke="#111" stroke-width="1.19" fill="none" stroke-linecap="round"/><path d="M91.4 10.9 Q91.3 12.5 89.9 11.0" stroke="#111" stroke-width="1.24" fill="none" stroke-linecap="round"/><path d="M89.6 13.3 Q90.8 15.6 89.4 16.1" stroke="#111" stroke-width="1.21" fill="none" stroke-linecap="round"/><path d="M89.3 15.8 Q89.8 17.9 91.4 16.2" stroke="#111" stroke-width="0.90" fill="none" stroke-linecap="round"/><path d="M87.8 18.0 Q91.1 18.2 91.2 20.6" stroke="#111" stroke-width="1.19" fill="none" stroke-linecap="round"/><path d="M90.1 16.3 Q89.8 18.0 87.5 17.0" stroke="#111" stroke-width="1.36" fill="none" stroke-linecap="round"/><path d="M90.5 20.8 Q89.5 21.0 87.9 21.3" stroke="#111" stroke-width="1.18" fill="none" stroke-linecap="round"/><path d="M87.7 21.4 Q89.7 24.2 89.2 24.0" stroke="#111" stroke-width="1.07" fill="none" stroke-linecap="round"/><path d="M89.6 25.2 Q91.7 25.0 92.1 26.3" stroke="#111" stroke-width="1.17" fill="none" stroke-linecap="round"/><path d="M91.6 28.0 Q93.0 30.2 90.7 29.7" stroke="#111" stroke-width="1.43" fill="none" stroke-linecap="round"/><path d="M89.3 28.7 Q91.3 29.6 90.0 27.9" stroke="#111" stroke-width="0.86" fill="none" stroke-linecap="round"/><path d="M88.6 28.4 Q91.1 27.1 91.9 28.4" stroke="#111" stroke-width="1.29" fill="none" stroke-linecap="round"/><path d="M88.8 30.0 Q87.2 30.5 88.1 30.2" stroke="#111" stroke-width="1.27" fill="none" stroke-linecap="round"/><path d="M89.8 30.5 Q87.8 30.6 88.4 31.4" stroke="#111" stroke-width="0.87" fill="none" stroke-linecap="round"/><path d="M90.6 32.6 Q88.5 31.3 87.8 32.3" stroke="#111" stroke-width="1.37" fill="none" stroke-linecap="round"/><path d="M97.5 8.4 Q97.3 9.8 98.6 7.8" stroke="#111" stroke-width="0.95" fill="none" stroke-linecap="round"/><path d="M94.8 7.1 Q95.4 5.9 98.2 8.4" stroke="#111" stroke-width="1.02" fill="none" stroke-linecap="round"/><path d="M95.7 7.8 Q96.0 8.1 95.7 9.4" stroke="#111" stroke-width="1.02" fill="none" stroke-linecap="round"/><path d="M97.3 12.5 Q96.8 13.8 97.7 14.8" stroke="#111" stroke-width="0.85" fill="none" stroke-linecap="round"/><path d="M95.1 10.9 Q94.5 11.2 96.1 12.6" stroke="#111" stroke-width="1.15" fill="none" stroke-linecap="round"/><path d="M98.5 10.8 Q97.2 10.1 97.4 10.5" stroke="#111" stroke-width="1.01" fill="none" stroke-linecap="round"/><path d="M96.6 17.4 Q97.8 16.3 96.3 19.2" stroke="#111" stroke-width="1.08" fill="none" stroke-linecap="round"/><path d="M95.8 14.6 Q93.3 16.2 94.4 16.6" stroke="#111" stroke-width="0.81" fill="none" stroke-linecap="round"/><path d="M98.0 23.5 Q96.4 23.8 94.5 23.8" stroke="#111" stroke-width="1.15" fill="none" stroke-linecap="round"/><path d="M97.6 23.0 Q96.6 24.0 98.1 24.8" stroke="#111" stroke-width="1.21" fill="none" stroke-linecap="round"/><path d="M97.8 22.6 Q98.3 23.2 97.3 24.7" stroke="#111" stroke-width="1.26" fill="none" stroke-linecap="round"/><path d="M97.9 26.9 Q97.5 26.6 96.3 29.0" stroke="#111" stroke-width="1.28" fill="none" stroke-linecap="round"/><path d="M95.5 25.8 Q95.7 25.1 95.2 26.9" stroke="#111" stroke-width="0.82" fill="none" stroke-linecap="round"/><path d="M95.9 27.5 Q98.5 27.2 98.6 29.2" stroke="#111" stroke-width="0.90" fill="none" stroke-linecap="round"/><path d="M98.6 25.8 Q96.9 25.3 97.7 25.9" stroke="#111" stroke-width="0.80" fill="none" stroke-linecap="round"/><path d="M98.4 29.4 Q99.7 30.0 97.0 32.1" stroke="#111" stroke-width="0.97" fill="none" stroke-linecap="round"/><path d="M97.5 31.3 Q97.5 31.4 94.4 30.9" stroke="#111" stroke-width="1.35" fill="none" stroke-linecap="round"/><path d="M97.8 30.6 Q96.9 30.0 96.1 31.2" stroke="#111" stroke-width="1.01" fill="none" stroke-linecap="round"/></svg></div><svg style="left:25px;top:101px" width="95" height="4"><path d="M0 1 L95 1" stroke="#AAA" stroke-width="1"/></svg><svg style="left:25px;top:105px" width="50" height="4"><path d="M0 1 L50 1" stroke="#AAA" stroke-width="1"/></svg></div>
<div class="abs" style="left:70px;top:670px;width:157px;height:119px;border:3px solid #C9491F;background:#fff"></div>
<div class="abs" style="left:73px;top:673px;width:151px;height:113px;overflow:hidden"></div>
<div class="abs" style="left:73px;top:813px;width:151px;height:113px;background:#fff;border:1px solid #E0E0E0"></div>
<div class="abs" style="left:73px;top:813px;width:151px;height:113px;overflow:hidden"><div class="abs" style="left:0;top:0;width:892px;height:669px;transform-origin:0 0;transform:scale(0.16928)"><div class="t" style="left:50px;top:97px;font-size:27px;color:#000;-webkit-text-stroke:3px #000">郭沫若</div><div class="t" style="left:50px;top:150px;font-size:22px;color:#000;-webkit-text-stroke:0px #000">•</div><div class="t" style="left:88px;top:146px;font-size:30px;color:#000;-webkit-text-stroke:3.5px #000">《“生活在种子的图腾”——关于郭沫若文学生活的研究专</div><div class="t" style="left:88px;top:182px;font-size:30px;color:#000;-webkit-text-stroke:3.5px #000">的的研究》</div><div class="t" style="left:250px;top:188px;font-size:18px;color:#000;-webkit-text-stroke:1px #000">（《文学评论》2020年第1期）</div><div class="t" style="left:50px;top:217px;font-size:22px;color:#000;-webkit-text-stroke:0px #000">•</div><div class="t" style="left:88px;top:213px;font-size:30px;color:#000;-webkit-text-stroke:3.5px #000">《“作品论”：中国文学研究的方法论的新起点》</div><div class="t" style="left:760px;top:220px;font-size:18px;color:#000;-webkit-text-stroke:1px #000">（《中国社会科学》</div><div class="t" style="left:88px;top:250px;font-size:16px;color:#000;-webkit-text-stroke:1px #000">2021年第3期）</div><div class="t" style="left:50px;top:279px;font-size:22px;color:#000;-webkit-text-stroke:0px #000">•</div><div class="t" style="left:88px;top:273px;font-size:30px;color:#000;-webkit-text-stroke:3.5px #000">《中国中国的“文字”研究》</div><div class="t" style="left:460px;top:280px;font-size:18px;color:#000;-webkit-text-stroke:1px #000">（《文学遗产》2021年第4期）</div><div class="t" style="left:50px;top:383px;font-size:27px;color:#000;-webkit-text-stroke:3px #000">韩愈</div><div class="t" style="left:50px;top:427px;font-size:22px;color:#000;-webkit-text-stroke:0px #000">•</div><div class="t" style="left:88px;top:423px;font-size:30px;color:#000;-webkit-text-stroke:3.5px #000">《古典诗学中“诗”的概念》</div><div class="t" style="left:462px;top:430px;font-size:18px;color:#000;-webkit-text-stroke:1px #000">（《文学评论》2019年第2期）</div><div class="t" style="left:50px;top:467px;font-size:22px;color:#000;-webkit-text-stroke:0px #000">•</div><div class="t" style="left:88px;top:463px;font-size:30px;color:#000;-webkit-text-stroke:3.5px #000">《杜甫与中国诗学批评的“诗”观》</div><div class="t" style="left:546px;top:470px;font-size:18px;color:#000;-webkit-text-stroke:1px #000">（《文学评论》2019年第2期）</div><div class="t" style="left:50px;top:507px;font-size:22px;color:#000;-webkit-text-stroke:0px #000">•</div><div class="t" style="left:88px;top:503px;font-size:30px;color:#000;-webkit-text-stroke:3.5px #000">《“诗”作为诗学概念的形成》</div><div class="t" style="left:490px;top:510px;font-size:18px;color:#000;-webkit-text-stroke:1px #000">（《文学评论》2019年第2期）</div><div class="t" style="left:50px;top:547px;font-size:22px;color:#000;-webkit-text-stroke:0px #000">•</div><div class="t" style="left:88px;top:543px;font-size:30px;color:#000;-webkit-text-stroke:3.5px #000">《中国古典诗学中的“字”》</div><div class="t" style="left:490px;top:550px;font-size:18px;color:#000;-webkit-text-stroke:1px #000">（《文学评论》2019年第2期）</div></div></div>
<div class="abs" style="left:73px;top:953px;width:151px;height:12px;background:#fff;border:1px solid #E0E0E0;border-bottom:none"></div>
<div class="abs" style="left:478px;top:244px;width:893px;height:670px;background:#fff;border:1px solid #E6E6E6;box-shadow:1px 1px 3px rgba(0,0,0,.06)"></div>
<div class="abs" style="left:273px;top:922px;width:1321px;height:1px;background:#fff"></div>
<div class="abs" style="left:273px;top:923px;width:1321px;height:1px;background:#CFCFCF"></div>
<div class="t" style="left:288px;top:934px;font-size:18.5px;color:#666;font-weight:400;">单击此处添加备注</div>
<div class="abs" style="left:1573px;top:258px;width:21px;height:575px;background:#E9E9E9"></div>
<div class="abs" style="left:1573px;top:237px;width:21px;height:21px;background:#fff;border:1px solid #DCDCDC"></div>
<svg style="left:1578px;top:245px;" width="11" height="6" viewBox="0 0 11 6"><path d="M0.5 5.5 L5.5 0.5 L10.5 5.5Z" fill="#666"/></svg>
<div class="abs" style="left:1573px;top:737px;width:21px;height:23px;background:#fff;border:1px solid #D8D8D8"></div>
<div class="abs" style="left:1573px;top:832px;width:21px;height:21px;background:#fff;border:1px solid #DCDCDC"></div>
<svg style="left:1578px;top:840px;" width="11" height="6" viewBox="0 0 11 6"><path d="M0.5 0.5 L5.5 5.5 L10.5 0.5Z" fill="#666"/></svg>
<svg style="left:1578px;top:858px;" width="11" height="12" viewBox="0 0 11 12"><path d="M0.5 5.5 L5.5 0.5 L10.5 5.5Z M0.5 11.5 L5.5 6.5 L10.5 11.5Z" fill="#666"/></svg>
<svg style="left:1578px;top:881px;" width="11" height="12" viewBox="0 0 11 12"><path d="M0.5 0.5 L5.5 5.5 L10.5 0.5Z M0.5 6.5 L5.5 11.5 L10.5 6.5Z" fill="#666"/></svg>
<div class="abs" style="left:1573px;top:927px;width:21px;height:18px;background:#fff;border:1px solid #DCDCDC"></div>
<svg style="left:1578px;top:933px;" width="11" height="6" viewBox="0 0 11 6"><path d="M0.5 5.5 L5.5 0.5 L10.5 5.5Z" fill="#666"/></svg>
<div class="abs" style="left:1573px;top:945px;width:21px;height:19px;background:#fff;border:1px solid #DCDCDC"></div>
<svg style="left:1578px;top:951px;" width="11" height="6" viewBox="0 0 11 6"><path d="M0.5 0.5 L5.5 5.5 L10.5 0.5Z" fill="#666"/></svg>
<div class="abs" style="left:1594px;top:235px;width:60px;height:730px;background:#fff"></div>
<div class="t" style="left:1598px;top:250px;font-size:14px;color:#444;font-weight:400;">资源库</div>
<svg style="left:1641px;top:255px;" width="8" height="6" viewBox="0 0 8 6"><path d="M0 0 L8 0 L4 5Z" fill="#555"/></svg>
<svg style="left:1612px;top:301px;" width="25" height="25" viewBox="0 0 25 25"><rect x="0" y="2" width="19" height="22" rx="2" fill="#5B6CF0"/><path d="M4 7 L11 7 M4 11 L8 11" stroke="#fff" stroke-width="2"/><circle cx="18" cy="17" r="7" fill="#5B6CF0" stroke="#fff" stroke-width="1.5"/><path d="M14.5 17 L17 19.5 L21.5 14.5" stroke="#fff" stroke-width="1.8" fill="none"/></svg>
<div class="t" style="left:1614px;top:331px;font-size:10.5px;color:#333;font-weight:400;">总结</div>
<svg style="left:1612px;top:365px;" width="25" height="25" viewBox="0 0 25 25"><rect x="1" y="1" width="23" height="22" rx="2" fill="#E4E6FA"/><rect x="5" y="1" width="5" height="10" fill="#fff"/></svg>
<div class="t" style="left:1614px;top:396px;font-size:10.5px;color:#C4C4C4;font-weight:400;">教育</div>
<svg style="left:1612px;top:430px;" width="25" height="25" viewBox="0 0 25 25"><rect x="1" y="1" width="23" height="23" rx="3" fill="#E4E6FA"/><path d="M5 10 L12.5 4 L20 10Z M7 11 L7 18 M12.5 11 L12.5 18 M18 11 L18 18 M5 19 L20 19" stroke="#fff" fill="#fff" stroke-width="2"/></svg>
<div class="t" style="left:1614px;top:460px;font-size:10.5px;color:#C4C4C4;font-weight:400;">党政</div>
<svg style="left:1612px;top:495px;" width="25" height="25" viewBox="0 0 25 25"><rect x="2" y="1" width="21" height="23" rx="2" fill="#E4E6FA"/><path d="M7 7 L16 7 M7 12 L13 12 M7 17 L16 17" stroke="#fff" stroke-width="2"/></svg>
<div class="t" style="left:1614px;top:524px;font-size:10.5px;color:#C4C4C4;font-weight:400;">策划</div>
<svg style="left:1612px;top:559px;" width="25" height="25" viewBox="0 0 25 25"><rect x="1" y="2" width="23" height="20" rx="3" fill="#E4E6FA"/><path d="M5 12 L20 12" stroke="#fff" stroke-width="2.5"/></svg>
<div class="t" style="left:1614px;top:589px;font-size:10.5px;color:#C4C4C4;font-weight:400;">答辩</div>
<svg style="left:1612px;top:624px;" width="25" height="25" viewBox="0 0 25 25"><rect x="1" y="1" width="23" height="21" rx="3" fill="#E4E6FA"/><path d="M1 7 L24 7" stroke="#fff" stroke-width="1.5"/><circle cx="7" cy="14" r="1.5" fill="#fff"/><circle cx="12.5" cy="14" r="1.5" fill="#fff"/><circle cx="18" cy="14" r="1.5" fill="#fff"/></svg>
<div class="t" style="left:1614px;top:654px;font-size:10.5px;color:#C4C4C4;font-weight:400;">图示</div>
<svg style="left:1612px;top:688px;" width="25" height="25" viewBox="0 0 25 25"><circle cx="12.5" cy="11.5" r="11" fill="#E4E6FA"/><path d="M6 11.5 L9 11.5 M11 11.5 L14 11.5 M16 11.5 L19 11.5" stroke="#fff" stroke-width="2"/></svg>
<div class="t" style="left:1614px;top:718px;font-size:10.5px;color:#C4C4C4;font-weight:400;">更多</div>
<svg style="left:1603px;top:749px;" width="45" height="45" viewBox="0 0 45 45"><path d="M2 22 L17 13 L25 40 L11 43Z" fill="#E2372A" stroke="#E2372A" stroke-width="3" stroke-linejoin="round"/><path d="M11 7 L27 3 L35 34 L19 39Z" fill="#F2473A" stroke="#F2473A" stroke-width="3" stroke-linejoin="round"/><circle cx="20" cy="14" r="4" fill="#F7C080"/><circle cx="33" cy="28" r="6.5" fill="#F9B93A"/><path d="M39 0 L43 4 M43 0 L39 4" stroke="#DDD" stroke-width="0.8"/></svg>
<div class="abs" style="left:478px;top:244px;width:892px;height:669px;overflow:hidden"><div class="abs" style="left:87px;top:81px;width:13px;height:13px;background:#000;border-radius:50%"></div><div class="t" style="left:117px;top:63px;font-size:53.3px;font-weight:700;color:#000;">三、杜甫研究与中国诗学理论</div><div class="t" style="left:55px;top:155px;font-size:27.5px;font-weight:400;color:#000;letter-spacing:0.2px">张伯伟《中国古代文学研究的理论和方法问题》<span style="font-size:23px;letter-spacing:0"><span style="display:inline-block;width:14px;margin-right:-4px;text-align:center;font-size:22px">(</span>《文学遗产》<span style="display:inline-block;width:41px"><span style="display:inline-block;transform:scaleX(0.8);transform-origin:0 0">2016</span></span>年</span></div><div class="t" style="left:55px;top:186px;font-size:22px;font-weight:400;color:#000;">第<span style="display:inline-block;width:11px"><span style="display:inline-block;transform:scaleX(0.8);transform-origin:0 0">3</span></span>期）：</div><div class="t" style="left:56px;top:249.0px;font-size:28px;font-weight:400;color:#000;letter-spacing:1.85px;-webkit-text-stroke:0.6px #000">我们在进行自身的理论和方法的建设和探索时，其基本原则</div><div class="t" style="left:56px;top:277.79999999999995px;font-size:28px;font-weight:400;color:#000;letter-spacing:1.85px;-webkit-text-stroke:0.6px #000">就应该是以文本阅读为基础，通过个案研究探索具体可行的</div><div class="t" style="left:56px;top:306.6px;font-size:28px;font-weight:400;color:#000;letter-spacing:1.85px;-webkit-text-stroke:0.6px #000">方法，走出模仿或对抗的误区，在与西洋学术的对话中形成</div><div class="t" style="left:56px;top:335.4px;font-size:28px;font-weight:400;color:#000;letter-spacing:1.85px;-webkit-text-stroke:0.6px #000">其理论。</div><div class="t" style="left:55px;top:400px;font-size:27.5px;font-weight:400;color:#000;letter-spacing:0.18px">蒋寅《在中国发现批评史——清代诗学研究与中国文学理论、批</div><div class="t" style="left:55px;top:428px;font-size:27.5px;font-weight:400;color:#000;letter-spacing:0.2px">评传统的再认识》<span style="font-size:23px;letter-spacing:0"><span style="display:inline-block;width:14px;margin-right:-4px;text-align:center;font-size:22px">(</span>《文艺研究》<span style="display:inline-block;width:41px"><span style="display:inline-block;transform:scaleX(0.8);transform-origin:0 0">2017</span></span>年第<span style="display:inline-block;width:20.5px"><span style="display:inline-block;transform:scaleX(0.8);transform-origin:0 0">10</span></span>期）：</span></div><div class="t" style="left:56px;top:495.5px;font-size:28px;font-weight:400;color:#000;letter-spacing:1.85px;-webkit-text-stroke:0.6px #000">清代诗学的丰富文献将改变我们的看法，促使我们重新认识</div><div class="t" style="left:56px;top:523.6px;font-size:28px;font-weight:400;color:#000;letter-spacing:1.85px;-webkit-text-stroke:0.6px #000">中国文学理论、批评的传统，看到它拥有的丰富的概念、命</div><div class="t" style="left:56px;top:551.7px;font-size:28px;font-weight:400;color:#000;letter-spacing:1.85px;-webkit-text-stroke:0.6px #000">题和独特的批评形式，从而实现<span style="display:inline-block;width:29.7px;text-align:right">“</span>在中国发现批评史<span style="display:inline-block;width:29.7px;text-align:left">”</span>的学</div><div class="t" style="left:56px;top:579.8px;font-size:28px;font-weight:400;color:#000;letter-spacing:1.85px;-webkit-text-stroke:0.6px #000">术理念。</div></div>
<div class="abs" style="left:73px;top:673px;width:892px;height:669px;transform-origin:0 0;transform:scale(0.16928);overflow:hidden"><div class="abs" style="left:87px;top:81px;width:13px;height:13px;background:#000;border-radius:50%"></div><div class="t" style="left:117px;top:63px;font-size:53.3px;font-weight:700;color:#000;-webkit-text-stroke:1.5px #000;">三、杜甫研究与中国诗学理论</div><div class="t" style="left:55px;top:155px;font-size:27.5px;font-weight:400;color:#000;-webkit-text-stroke:1.6px #000;letter-spacing:0.2px">张伯伟《中国古代文学研究的理论和方法问题》<span style="font-size:23px;letter-spacing:0"><span style="display:inline-block;width:14px;margin-right:-4px;text-align:center;font-size:22px">(</span>《文学遗产》<span style="display:inline-block;width:41px"><span style="display:inline-block;transform:scaleX(0.8);transform-origin:0 0">2016</span></span>年</span></div><div class="t" style="left:55px;top:186px;font-size:22px;font-weight:400;color:#000;-webkit-text-stroke:1.6px #000;">第<span style="display:inline-block;width:11px"><span style="display:inline-block;transform:scaleX(0.8);transform-origin:0 0">3</span></span>期）：</div><div class="t" style="left:56px;top:249.0px;font-size:28px;font-weight:400;color:#000;letter-spacing:1.85px;-webkit-text-stroke:3px #000">我们在进行自身的理论和方法的建设和探索时，其基本原则</div><div class="t" style="left:56px;top:277.79999999999995px;font-size:28px;font-weight:400;color:#000;letter-spacing:1.85px;-webkit-text-stroke:3px #000">就应该是以文本阅读为基础，通过个案研究探索具体可行的</div><div class="t" style="left:56px;top:306.6px;font-size:28px;font-weight:400;color:#000;letter-spacing:1.85px;-webkit-text-stroke:3px #000">方法，走出模仿或对抗的误区，在与西洋学术的对话中形成</div><div class="t" style="left:56px;top:335.4px;font-size:28px;font-weight:400;color:#000;letter-spacing:1.85px;-webkit-text-stroke:3px #000">其理论。</div><div class="t" style="left:55px;top:400px;font-size:27.5px;font-weight:400;color:#000;-webkit-text-stroke:1.6px #000;letter-spacing:0.18px">蒋寅《在中国发现批评史——清代诗学研究与中国文学理论、批</div><div class="t" style="left:55px;top:428px;font-size:27.5px;font-weight:400;color:#000;-webkit-text-stroke:1.6px #000;letter-spacing:0.2px">评传统的再认识》<span style="font-size:23px;letter-spacing:0"><span style="display:inline-block;width:14px;margin-right:-4px;text-align:center;font-size:22px">(</span>《文艺研究》<span style="display:inline-block;width:41px"><span style="display:inline-block;transform:scaleX(0.8);transform-origin:0 0">2017</span></span>年第<span style="display:inline-block;width:20.5px"><span style="display:inline-block;transform:scaleX(0.8);transform-origin:0 0">10</span></span>期）：</span></div><div class="t" style="left:56px;top:495.5px;font-size:28px;font-weight:400;color:#000;letter-spacing:1.85px;-webkit-text-stroke:3px #000">清代诗学的丰富文献将改变我们的看法，促使我们重新认识</div><div class="t" style="left:56px;top:523.6px;font-size:28px;font-weight:400;color:#000;letter-spacing:1.85px;-webkit-text-stroke:3px #000">中国文学理论、批评的传统，看到它拥有的丰富的概念、命</div><div class="t" style="left:56px;top:551.7px;font-size:28px;font-weight:400;color:#000;letter-spacing:1.85px;-webkit-text-stroke:3px #000">题和独特的批评形式，从而实现<span style="display:inline-block;width:29.7px;text-align:right">“</span>在中国发现批评史<span style="display:inline-block;width:29.7px;text-align:left">”</span>的学</div><div class="t" style="left:56px;top:579.8px;font-size:28px;font-weight:400;color:#000;letter-spacing:1.85px;-webkit-text-stroke:3px #000">术理念。</div></div>
<svg style="left:1161px;top:682px;" width="12" height="23" viewBox="0 0 12 23"><path d="M2 1 L10 1 M6 1 L6 22 M2 22 L10 22" stroke="#222" stroke-width="1.5" fill="none"/></svg>
<div class="abs" style="left:26px;top:965px;width:1628px;height:27px;background:#fff"></div>
<div class="t" style="left:36px;top:971px;font-size:15px;color:#484848;font-weight:400;">幻灯片 第 47 张，共 54 张</div>
<svg style="left:240px;top:971px;" width="17" height="15" viewBox="0 0 17 15"><path d="M1 1 L8 1 L8 14 L1 14Z" fill="none" stroke="#888" stroke-width="1.1"/><path d="M8 1 L15 1 L15 8" fill="none" stroke="#888" stroke-width="1.1"/><path d="M9 13 L15 6" stroke="#777" stroke-width="1.5"/></svg>
<div class="t" style="left:279px;top:971px;font-size:15px;color:#484848;font-weight:400;">中文(中国)</div>
<svg style="left:370px;top:970px;" width="19" height="18" viewBox="0 0 19 18"><circle cx="8" cy="8" r="6.5" fill="none" stroke="#555" stroke-width="1.3" stroke-dasharray="3 2"/><path d="M10 10 L17 17 M17 10 L10 17" stroke="#333" stroke-width="1.6"/></svg>
<div class="t" style="left:392px;top:971px;font-size:15px;color:#484848;font-weight:400;">辅助功能: 调查</div>
<svg style="left:1047px;top:970px;" width="14" height="16" viewBox="0 0 14 16"><path d="M7 1 L7 6 M4 3.5 L7 1 L10 3.5" stroke="#666" fill="none" stroke-width="1"/><path d="M1 8 L13 8 M1 11 L13 11 M1 14 L10 14" stroke="#777" stroke-width="1.2"/></svg>
<div class="t" style="left:1067px;top:971px;font-size:15px;color:#484848;font-weight:400;">备注</div>
<svg style="left:1122px;top:970px;" width="19" height="17" viewBox="0 0 19 17"><path d="M1 1 L18 1 L18 11 L8 11 L4 16 L4 11 L1 11Z" fill="#555"/></svg>
<div class="t" style="left:1144px;top:971px;font-size:15px;color:#484848;font-weight:400;">批注</div>
<div class="abs" style="left:1197px;top:965px;width:51px;height:27px;background:#D7D7D7"></div>
<svg style="left:1214px;top:970px;" width="18" height="17" viewBox="0 0 18 17"><rect x="0.6" y="0.6" width="16.8" height="15.8" fill="none" stroke="#777" stroke-width="1.1"/><path d="M4 1 L4 16" stroke="#777"/><rect x="7" y="4" width="8" height="6" fill="none" stroke="#777"/></svg>
<svg style="left:1265px;top:970px;" width="18" height="17" viewBox="0 0 18 17"><rect x="0.5" y="0.5" width="7" height="7" fill="none" stroke="#777"/><rect x="10.5" y="0.5" width="7" height="7" fill="none" stroke="#777"/><rect x="0.5" y="9.5" width="7" height="7" fill="none" stroke="#777"/><rect x="10.5" y="9.5" width="7" height="7" fill="none" stroke="#777"/></svg>
<svg style="left:1316px;top:970px;" width="17" height="17" viewBox="0 0 17 17"><path d="M0.5 1 L8.5 2 L16.5 1 L16.5 16 L8.5 15 L0.5 16Z" fill="none" stroke="#777"/><path d="M8.5 2 L8.5 16 M3 5 L7 5 M3 8 L7 8 M3 11 L7 11 M10 5 L14 5 M10 8 L14 8 M10 11 L14 11" stroke="#888"/></svg>
<svg style="left:1367px;top:970px;" width="18" height="18" viewBox="0 0 18 18"><path d="M0 1 L18 1" stroke="#777" stroke-width="1.5"/><rect x="2" y="2" width="14" height="9" fill="none" stroke="#777"/><path d="M5 5 L13 5" stroke="#999"/><path d="M9 11 L9 17 M6 17 L12 17" stroke="#777"/></svg>
<svg style="left:1407px;top:978px;" width="10" height="2" viewBox="0 0 10 2"><path d="M0 1 L10 1" stroke="#555" stroke-width="1.2"/></svg>
<div class="abs" style="left:1425px;top:978px;width:125px;height:2px;background:#333"></div>
<div class="abs" style="left:1466px;top:969px;width:7px;height:19px;background:#666;border-radius:1px"></div>
<div class="abs" style="left:1486px;top:975px;width:1px;height:8px;background:#333"></div>
<svg style="left:1556px;top:973px;" width="11" height="11" viewBox="0 0 11 11"><path d="M0 5.5 L11 5.5 M5.5 0 L5.5 11" stroke="#555" stroke-width="1.2"/></svg>
<div class="t" style="left:1582px;top:970px;font-size:17px;color:#444;font-weight:400;">73%</div>
<svg style="left:1634px;top:972px;" width="14" height="14" viewBox="0 0 14 14"><rect x="0.5" y="0.5" width="13" height="13" fill="none" stroke="#888"/><path d="M3 7 L6 7 M8 7 L11 7 M7 3 L7 6 M7 8 L7 11" stroke="#666"/></svg>
<div class="abs" style="left:380px;top:992px;width:1050px;height:6px;background:linear-gradient(90deg,#000 0%,#2A0404 10%,#4A0808 25%,#200202 40%,#5A0A0A 55%,#300404 70%,#4A0606 85%,#000 100%)"></div>
<div class="abs" style="left:1694px;top:36px;width:213px;height:120px;overflow:hidden;background:linear-gradient(90deg,#D6D6DA 0%,#E2E2E6 40%,#ECECEF 100%)">
<div class="abs" style="left:0px;top:0px;width:213px;height:120px;background:linear-gradient(180deg,rgba(190,190,196,.45) 0%,rgba(230,230,235,0) 35%)"></div>
<div class="abs" style="left:0px;top:0px;width:49px;height:120px;background:linear-gradient(90deg,#A8A298 0%,#DAD6CE 6%,#E6E2DA 14%,#A49E94 24%,#8E887E 34%,#D6D2CA 44%,#B0AAA0 52%,#8C867C 62%,#DCD8D0 74%,#E8E4DC 82%,#B8B2A8 92%,#C8C4BC 100%);filter:blur(0.7px)"></div>
<div class="abs" style="left:71px;top:6px;width:55px;height:18px;background:linear-gradient(180deg,#E6E0CA 0%,#DAD2B8 60%,#CCC4A6 100%);border-radius:2px;filter:blur(0.6px)"></div>
<div class="abs" style="left:84px;top:17px;width:20px;height:3px;background:#A89E7A;filter:blur(0.4px)"></div>
<div class="abs" style="left:74px;top:22px;width:50px;height:2px;background:#EEEAE0"></div>
<div class="abs" style="left:47px;top:28px;width:95px;height:92px;background:#CEC6B6;filter:blur(0.6px)"></div>
<div class="abs" style="left:48px;top:38px;width:35px;height:24px;background:linear-gradient(90deg,#4A4A4A 0%,#7A766A 15%,#3A3E34 30%,#6A6A5A 45%,#2A2E2A 52%,#B83A30 58%,#D4483A 72%,#C23A30 86%,#8A2E24 100%);filter:blur(0.7px)"></div>
<div class="abs" style="left:70px;top:29px;width:24px;height:9px;background:#4E5E86;filter:blur(0.6px)"></div>
<div class="abs" style="left:113px;top:38px;width:37px;height:10px;background:linear-gradient(90deg,#D8D8DC,#EEEEF0 50%,#C8C8CC);filter:blur(0.8px)"></div>
<div class="abs" style="left:114px;top:48px;width:32px;height:15px;background:linear-gradient(90deg,#6A7488 0%,#4E5A70 50%,#5E687C 100%);filter:blur(0.8px)"></div>
<div class="abs" style="left:47px;top:62px;width:95px;height:4px;background:#DCCFAE"></div>
<div class="abs" style="left:47px;top:66px;width:19px;height:21px;background:linear-gradient(90deg,#3A3A3A,#5A5A56 50%,#2E2E2E);filter:blur(0.6px)"></div>
<div class="abs" style="left:66px;top:66px;width:15px;height:21px;background:#DAD6CE"></div>
<div class="abs" style="left:117px;top:66px;width:23px;height:21px;background:linear-gradient(90deg,#DCD6CC,#8A8070 30%,#E6E2DA 50%,#7A7060 75%,#D0CAC0);filter:blur(0.6px)"></div>
<div class="abs" style="left:47px;top:87px;width:95px;height:4px;background:#DCCFAE"></div>
<div class="abs" style="left:47px;top:91px;width:12px;height:29px;background:#4A4640;filter:blur(0.8px)"></div>
<div class="abs" style="left:44px;top:89px;width:135px;height:62px;background:radial-gradient(ellipse at 45% 25%,#E4DCE2 0%,#D6CCD4 55%,#C6BCC6 100%);border-radius:48% 52% 0 0 / 40% 50% 0 0;filter:blur(1px)"></div>
<div class="abs" style="left:83px;top:82px;width:25px;height:16px;background:#D8B8AC;border-radius:0 0 45% 45%;filter:blur(1px)"></div>
<div class="abs" style="left:78px;top:48px;width:38px;height:42px;background:radial-gradient(ellipse at 50% 50%,#E6BAA8 0%,#D8A694 55%,#C08C7A 100%);border-radius:44% 44% 48% 48%;filter:blur(0.9px)"></div>
<div class="abs" style="left:76px;top:37px;width:39px;height:19px;background:radial-gradient(ellipse at 50% 75%,#3E342E 0%,#28221E 70%);border-radius:50% 50% 28% 28%;filter:blur(0.9px)"></div>
<div class="abs" style="left:76px;top:48px;width:4px;height:14px;background:#2E2822;filter:blur(0.7px)"></div>
<div class="abs" style="left:111px;top:48px;width:4px;height:12px;background:#2E2822;filter:blur(0.7px)"></div>
<div class="abs" style="left:81px;top:60px;width:14px;height:7px;border:1px solid rgba(140,110,100,.5);border-radius:2px;filter:blur(0.5px)"></div>
<div class="abs" style="left:98px;top:60px;width:14px;height:7px;border:1px solid rgba(140,110,100,.5);border-radius:2px;filter:blur(0.5px)"></div>
<div class="abs" style="left:91px;top:75px;width:12px;height:3px;background:#A86A60;border-radius:2px;filter:blur(1px);opacity:.6"></div>
<div class="abs" style="left:184px;top:108px;width:12px;height:12px;background:#5A6048;filter:blur(1.5px);opacity:.55"></div>
</div>
</body></html>
